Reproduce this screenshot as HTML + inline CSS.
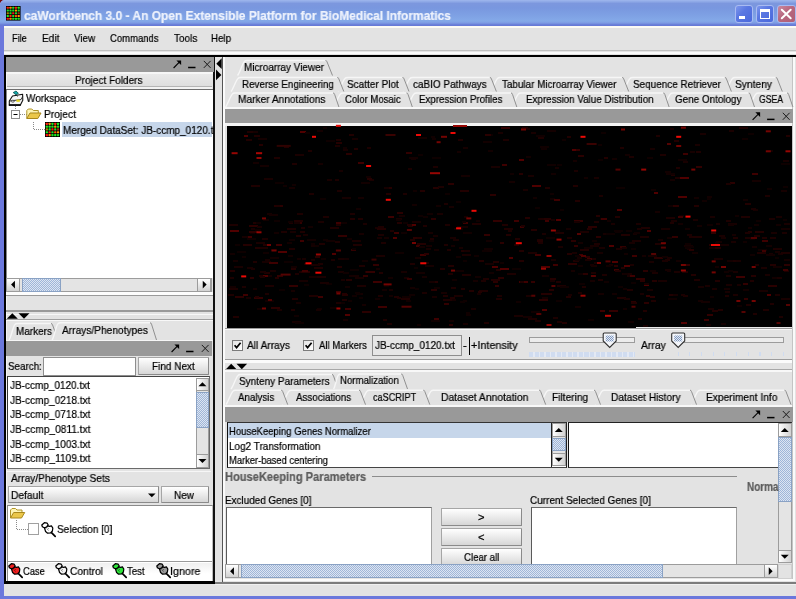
<!DOCTYPE html>
<html><head><meta charset="utf-8"><title>caWorkbench 3.0</title>
<style>
html,body{margin:0;padding:0;}
body{width:796px;height:599px;overflow:hidden;position:relative;background:#e3e3e3;font-family:"Liberation Sans",sans-serif;font-size:11px;color:#000;}
#app{position:absolute;left:0;top:0;width:796px;height:599px;overflow:hidden;}
#app span.t{will-change:transform;-webkit-text-stroke:0.22px currentColor;}
#app div{position:absolute;box-sizing:border-box;}
#app svg{position:absolute;overflow:visible;}
#app span.t{position:absolute;white-space:nowrap;line-height:14px;height:14px;transform-origin:0 0;}
</style></head><body><div id="app">
<div style="left:0px;top:0px;width:796px;height:599px;background:#6b78dc;"></div>
<div style="left:0px;top:0px;width:796px;height:26px;background:linear-gradient(to bottom,#9fb7ed 0px,#90aae7 1.5px,#7c97de 3.5px,#7997df 8px,#7d9fe3 14px,#84a9e8 21px,#7d9be3 23px,#6b81d9 24.5px,#6577d5 26px);"></div>
<div style="left:4px;top:26px;width:792px;height:570px;background:#e3e3e3;"></div>
<svg style="left:5.5px;top:6.2px" width="14.6" height="14.6" viewBox="0 0 15 15"><rect width="15" height="15" fill="#000"/><rect x="0.75" y="0.75" width="2.2" height="2.2" rx="0.6" fill="#f21"/><rect x="3.55" y="0.75" width="2.2" height="2.2" rx="0.6" fill="#f80"/><rect x="6.35" y="0.75" width="2.2" height="2.2" rx="0.6" fill="#2d2"/><rect x="9.15" y="0.75" width="2.2" height="2.2" rx="0.6" fill="#f21"/><rect x="11.95" y="0.75" width="2.2" height="2.2" rx="0.6" fill="#2e2"/><rect x="0.75" y="3.55" width="2.2" height="2.2" rx="0.6" fill="#2d2"/><rect x="3.55" y="3.55" width="2.2" height="2.2" rx="0.6" fill="#2e2"/><rect x="6.35" y="3.55" width="2.2" height="2.2" rx="0.6" fill="#2d2"/><rect x="9.15" y="3.55" width="2.2" height="2.2" rx="0.6" fill="#f90"/><rect x="11.95" y="3.55" width="2.2" height="2.2" rx="0.6" fill="#2d2"/><rect x="0.75" y="6.35" width="2.2" height="2.2" rx="0.6" fill="#a80"/><rect x="3.55" y="6.35" width="2.2" height="2.2" rx="0.6" fill="#2d2"/><rect x="6.35" y="6.35" width="2.2" height="2.2" rx="0.6" fill="#f11"/><rect x="9.15" y="6.35" width="2.2" height="2.2" rx="0.6" fill="#2d2"/><rect x="11.95" y="6.35" width="2.2" height="2.2" rx="0.6" fill="#931"/><rect x="0.75" y="9.15" width="2.2" height="2.2" rx="0.6" fill="#2e2"/><rect x="3.55" y="9.15" width="2.2" height="2.2" rx="0.6" fill="#f21"/><rect x="6.35" y="9.15" width="2.2" height="2.2" rx="0.6" fill="#2d2"/><rect x="9.15" y="9.15" width="2.2" height="2.2" rx="0.6" fill="#f50"/><rect x="11.95" y="9.15" width="2.2" height="2.2" rx="0.6" fill="#f90"/><rect x="0.75" y="11.95" width="2.2" height="2.2" rx="0.6" fill="#f11"/><rect x="3.55" y="11.95" width="2.2" height="2.2" rx="0.6" fill="#f80"/><rect x="6.35" y="11.95" width="2.2" height="2.2" rx="0.6" fill="#2d2"/><rect x="9.15" y="11.95" width="2.2" height="2.2" rx="0.6" fill="#2e2"/><rect x="11.95" y="11.95" width="2.2" height="2.2" rx="0.6" fill="#2d2"/></svg>
<svg style="left:0;top:0" width="6" height="6"><path d="M0 0 H3.4 Q0.9 0.9 0 3.8 Z" fill="#7a0c0c"/><path d="M3.6 0.2 Q1 1 0.2 4" stroke="#8fa8ee" stroke-width="0.8" fill="none"/></svg>
<div style="left:734.7px;top:5px;width:18.5px;height:18px;background:linear-gradient(135deg,#7d97ec 0%,#5a78e2 40%,#4a68dc 100%);border:1px solid #a9bbf2;border-radius:3px;"></div>
<div style="left:738.7px;top:16px;width:6.5px;height:3px;background:#fff;"></div>
<div style="left:755.8px;top:5px;width:18.5px;height:18px;background:linear-gradient(135deg,#7d97ec 0%,#5a78e2 40%,#4a68dc 100%);border:1px solid #a9bbf2;border-radius:3px;"></div>
<div style="left:760.0px;top:9px;width:10px;height:10px;border:1px solid #fff;border-top:3px solid #fff;"></div>
<div style="left:777px;top:5px;width:18.5px;height:18px;background:linear-gradient(135deg,#c98aa0 0%,#b8677f 45%,#ae5f76 100%);border:1px solid #a9bbf2;border-radius:3px;"></div>
<svg style="left:777px;top:5px" width="18.5" height="18" viewBox="0 0 18.5 18"><path d="M4.8 4.8 L13.7 13.2 M13.7 4.8 L4.8 13.2" stroke="#fff" stroke-width="2" stroke-linecap="round" fill="none"/></svg>
<div style="left:4px;top:26px;width:792px;height:2px;background:#fbfaf4;"></div>
<div style="left:4px;top:50px;width:792px;height:1px;background:#c0c0c0;"></div>
<div style="left:4px;top:52px;width:792px;height:2px;background:#fbfbfb;"></div>
<div style="left:4px;top:54.8px;width:792px;height:2.2px;background:#000;"></div>
<div style="left:4px;top:55px;width:1.5px;height:528px;background:#000;"></div>
<div style="left:213px;top:57px;width:2px;height:526px;background:#111;"></div>
<div style="left:4px;top:581px;width:211px;height:3px;background:#000;"></div>
<div style="left:5.5px;top:57px;width:1px;height:524px;background:#f4f4f4;"></div>
<div style="left:6px;top:57px;width:207.5px;height:15px;background:#999999;"></div>
<svg style="left:0;top:0" width="796" height="599"><path d="M173.6 68.0 L179.79999999999998 61.699999999999996" stroke="#000" stroke-width="1.1" fill="none"/><path d="M176.39999999999998 60.4 H181.1 V65.1 Z" fill="#000"/><path d="M188.10000000000002 67.5 H195.5" stroke="#000" stroke-width="1.5" fill="none"/><path d="M203.79999999999998 60.9 L210.6 67.89999999999999 M210.6 60.9 L203.79999999999998 67.89999999999999" stroke="#1a1a1a" stroke-width="1" fill="none"/></svg>
<div style="left:6px;top:72px;width:207px;height:1.5px;background:#f6f6f6;"></div>
<div style="left:7px;top:73.5px;width:205px;height:12.5px;background:linear-gradient(#e9e9e9,#dedede);"></div>
<div style="left:7px;top:86px;width:205px;height:1px;background:#b4b4b4;"></div>
<div style="left:7px;top:87px;width:205px;height:1.5px;background:#f2f2f2;"></div>
<div style="left:6px;top:88.5px;width:207px;height:1.5px;background:#6e6e6e;"></div>
<div style="left:6px;top:90px;width:207px;height:188px;background:#fff;border-left:1px solid #888;"></div>
<div style="left:62px;top:122px;width:150px;height:15px;background:#c6d6ea;"></div>
<svg style="left:45px;top:122px" width="15" height="15" viewBox="0 0 15 15"><rect width="15" height="15" fill="#000"/><rect x="0.75" y="0.75" width="2.2" height="2.2" rx="0.6" fill="#f21"/><rect x="3.55" y="0.75" width="2.2" height="2.2" rx="0.6" fill="#f80"/><rect x="6.35" y="0.75" width="2.2" height="2.2" rx="0.6" fill="#2d2"/><rect x="9.15" y="0.75" width="2.2" height="2.2" rx="0.6" fill="#f21"/><rect x="11.95" y="0.75" width="2.2" height="2.2" rx="0.6" fill="#2e2"/><rect x="0.75" y="3.55" width="2.2" height="2.2" rx="0.6" fill="#2d2"/><rect x="3.55" y="3.55" width="2.2" height="2.2" rx="0.6" fill="#2e2"/><rect x="6.35" y="3.55" width="2.2" height="2.2" rx="0.6" fill="#2d2"/><rect x="9.15" y="3.55" width="2.2" height="2.2" rx="0.6" fill="#f90"/><rect x="11.95" y="3.55" width="2.2" height="2.2" rx="0.6" fill="#2d2"/><rect x="0.75" y="6.35" width="2.2" height="2.2" rx="0.6" fill="#a80"/><rect x="3.55" y="6.35" width="2.2" height="2.2" rx="0.6" fill="#2d2"/><rect x="6.35" y="6.35" width="2.2" height="2.2" rx="0.6" fill="#f11"/><rect x="9.15" y="6.35" width="2.2" height="2.2" rx="0.6" fill="#2d2"/><rect x="11.95" y="6.35" width="2.2" height="2.2" rx="0.6" fill="#931"/><rect x="0.75" y="9.15" width="2.2" height="2.2" rx="0.6" fill="#2e2"/><rect x="3.55" y="9.15" width="2.2" height="2.2" rx="0.6" fill="#f21"/><rect x="6.35" y="9.15" width="2.2" height="2.2" rx="0.6" fill="#2d2"/><rect x="9.15" y="9.15" width="2.2" height="2.2" rx="0.6" fill="#f50"/><rect x="11.95" y="9.15" width="2.2" height="2.2" rx="0.6" fill="#f90"/><rect x="0.75" y="11.95" width="2.2" height="2.2" rx="0.6" fill="#f11"/><rect x="3.55" y="11.95" width="2.2" height="2.2" rx="0.6" fill="#f80"/><rect x="6.35" y="11.95" width="2.2" height="2.2" rx="0.6" fill="#2d2"/><rect x="9.15" y="11.95" width="2.2" height="2.2" rx="0.6" fill="#2e2"/><rect x="11.95" y="11.95" width="2.2" height="2.2" rx="0.6" fill="#2d2"/></svg>
<svg style="left:0;top:0" width="796" height="599"><path d="M15.5 106 V110 M33.5 122 V130 M34 129.5 H45 M20 114.5 H27" stroke="#8a8a8a" stroke-width="1" stroke-dasharray="1 1" fill="none"/><rect x="11.5" y="110.5" width="8" height="8" fill="#fff" stroke="#8c8c8c"/><path d="M13.5 114.5 H17.5" stroke="#000"/><path d="M9.3 101 L12.5 96 L22.6 94.2 L22.8 100.2 L20.5 104.8 H9.3 Z" fill="#f6f6f6" stroke="#111" stroke-width="1.1" stroke-linejoin="round"/><path d="M9.5 101 L21 99.6 L22.7 96.5" fill="none" stroke="#222" stroke-width="0.9"/><path d="M8.8 105.2 H20.8" stroke="#000" stroke-width="1.4"/><ellipse cx="12.8" cy="101.2" rx="1.6" ry="1" fill="#ddd" stroke="#333" stroke-width="0.7"/><rect x="16.4" y="99.6" width="3.4" height="2.2" fill="#e2d21c"/><path d="M13.2 92.6 L16 91 L18.4 93.3 L16.2 94.9 Z" fill="#14a8a8" stroke="#064f4f" stroke-width="0.8"/><path d="M16 94.5 L17.5 96.5" stroke="#222" stroke-width="0.9"/></svg>
<svg style="left:0;top:0" width="796" height="599"><path d="M26.8 118.5 V110.5 L28.3 109 H31.8 L33.3 110.5 H38.3 V113" fill="#fdf4b4" stroke="#b09428" stroke-width="1"/><path d="M26.8 118.5 L30.0 113 H41.0 L37.8 118.5 Z" fill="#ebc74a" stroke="#a8871c" stroke-width="1"/></svg>
<div style="left:6px;top:277.6px;width:205.5px;height:14.7px;background:#e4e4e4;border:1px solid #9c9c9c;"></div>
<div style="left:6px;top:277.6px;width:14.2px;height:14.7px;background:linear-gradient(#ffffff,#d2d2d2);border:1px solid #9c9c9c;"></div>
<div style="left:197.3px;top:277.6px;width:14.2px;height:14.7px;background:linear-gradient(#ffffff,#d2d2d2);border:1px solid #9c9c9c;"></div>
<svg style="left:0;top:0" width="796" height="599"><polygon points="14.95,280.70000000000005 14.95,288.5 11.05,284.6" fill="#000"/></svg>
<svg style="left:0;top:0" width="796" height="599"><polygon points="202.75,280.70000000000005 202.75,288.5 206.64999999999998,284.6" fill="#000"/></svg>
<div style="left:21.5px;top:277.6px;width:39.5px;height:14.7px;background-color:#dde5f2;background-image:linear-gradient(45deg,#9fb6d8 25%,transparent 25%,transparent 75%,#9fb6d8 75%),linear-gradient(45deg,#9fb6d8 25%,transparent 25%,transparent 75%,#9fb6d8 75%);background-size:2px 2px;background-position:0 0,1px 1px;border:1px solid #8aa2c4;"></div>
<div style="left:6px;top:292.4px;width:207px;height:3px;background:#fdfdfd;"></div>
<div style="left:6px;top:295.3px;width:207px;height:1.2px;background:#9a9a9a;"></div>
<div style="left:6px;top:310.4px;width:207px;height:1.2px;background:#9a9a9a;"></div>
<div style="left:6px;top:313.6px;width:207px;height:1.1px;background:#f8f8f8;"></div>
<svg style="left:0;top:0" width="796" height="599"><polygon points="6.800000000000001,318.75 17.8,318.75 12.3,313.25" fill="#000"/></svg>
<svg style="left:0;top:0" width="796" height="599"><polygon points="18.5,313.25 29.5,313.25 24,318.75" fill="#000"/></svg>
<div style="left:6px;top:318.7px;width:207px;height:1.2px;background:#a0a0a0;"></div>
<div style="left:6px;top:320px;width:207px;height:1.2px;background:#f8f8f8;"></div>
<svg style="left:0;top:0" width="796" height="599"><path d="M9 340 C11 338 13 326 15 324.5 Q15.7 323.5 17.5 323.5 L51.0 323.5 Q52.2 323.5 52.5 324.8 L58 340" fill="#e2e2e2" stroke="none"/><path d="M9 340 C11 338 13 326 15 324.5 Q15.7 323.5 17.5 323.5 L51.0 323.5" fill="none" stroke="#f6f6f6" stroke-width="1.4"/><path d="M51.0 323.5 Q52.2 323.5 52.5 324.8 L58 340" fill="none" stroke="#909090" stroke-width="1"/></svg>
<svg style="left:0;top:0" width="796" height="599"><path d="M52 340 C54 338 56 325.3 58 323.8 Q58.7 322.8 60.5 322.8 L150.0 322.8 Q151.2 322.8 151.5 324.1 L156.5 340" fill="#e3e3e3" stroke="none"/><path d="M52 340 C54 338 56 325.3 58 323.8 Q58.7 322.8 60.5 322.8 L150.0 322.8" fill="none" stroke="#f6f6f6" stroke-width="1.4"/><path d="M150.0 322.8 Q151.2 322.8 151.5 324.1 L156.5 340" fill="none" stroke="#909090" stroke-width="1"/></svg>
<div style="left:6px;top:339.6px;width:207px;height:1.4px;background:#f6f6f6;"></div>
<div style="left:6px;top:341px;width:205.5px;height:15px;background:#999999;"></div>
<svg style="left:0;top:0" width="796" height="599"><path d="M171.6 352.0 L177.79999999999998 345.7" stroke="#000" stroke-width="1.1" fill="none"/><path d="M174.39999999999998 344.40000000000003 H179.1 V349.1 Z" fill="#000"/><path d="M186.10000000000002 351.5 H193.5" stroke="#000" stroke-width="1.5" fill="none"/><path d="M201.79999999999998 344.90000000000003 L208.6 351.90000000000003 M208.6 344.90000000000003 L201.79999999999998 351.90000000000003" stroke="#1a1a1a" stroke-width="1" fill="none"/></svg>
<div style="left:42.5px;top:357px;width:93px;height:19px;background:#fff;border:1px solid #8e8e8e;"></div>
<div style="left:137.5px;top:357px;width:71.5px;height:18.3px;background:linear-gradient(#ffffff 0%,#efefef 40%,#d6d6d6 100%);border:1px solid #a6a6a6;border-right-color:#8a8a8a;border-bottom-color:#8a8a8a;border-radius:1px;"></div>
<div style="left:7px;top:376.3px;width:203px;height:92.5px;background:#fff;border:1px solid #6a6a6a;border-left-color:#333;border-top-color:#444;"></div>
<div style="left:195.7px;top:377.5px;width:13.5px;height:90px;background:#e4e4e4;border:1px solid #9c9c9c;"></div>
<div style="left:195.7px;top:377.5px;width:13.5px;height:13.5px;background:linear-gradient(90deg,#ffffff,#d2d2d2);border:1px solid #9c9c9c;"></div>
<div style="left:195.7px;top:454.0px;width:13.5px;height:13.5px;background:linear-gradient(90deg,#ffffff,#d2d2d2);border:1px solid #9c9c9c;"></div>
<svg style="left:0;top:0" width="796" height="599"><polygon points="198.45,386.2 206.45,386.2 202.45,382.2" fill="#000"/></svg>
<svg style="left:0;top:0" width="796" height="599"><polygon points="198.45,459.0 206.45,459.0 202.45,463.0" fill="#000"/></svg>
<div style="left:195.7px;top:392px;width:13.5px;height:36px;background-color:#dde5f2;background-image:linear-gradient(45deg,#9fb6d8 25%,transparent 25%,transparent 75%,#9fb6d8 75%),linear-gradient(45deg,#9fb6d8 25%,transparent 25%,transparent 75%,#9fb6d8 75%);background-size:2px 2px;background-position:0 0,1px 1px;border:1px solid #8aa2c4;"></div>
<div style="left:6px;top:471px;width:205px;height:1px;background:#f6f6f6;"></div>
<div style="left:8px;top:486px;width:150.5px;height:17px;background:linear-gradient(#ffffff 0%,#efefef 40%,#d6d6d6 100%);border:1px solid #a6a6a6;border-right-color:#8a8a8a;border-bottom-color:#8a8a8a;"></div>
<svg style="left:0;top:0" width="796" height="599"><polygon points="148.0,493.40000000000003 155.60000000000002,493.40000000000003 151.8,497.2" fill="#000"/></svg>
<div style="left:160.6px;top:486px;width:48.5px;height:17.2px;background:linear-gradient(#ffffff 0%,#efefef 40%,#d6d6d6 100%);border:1px solid #a6a6a6;border-right-color:#8a8a8a;border-bottom-color:#8a8a8a;border-radius:1px;"></div>
<div style="left:7px;top:505px;width:206px;height:76px;background:#fff;border:1px solid #8a8a8a;border-bottom:none;border-right-color:#bbb;"></div>
<div style="left:8px;top:561.3px;width:204px;height:1.2px;background:#9a9a9a;"></div>
<div style="left:8px;top:562.5px;width:204px;height:18.5px;background:linear-gradient(#f0f0f0,#ffffff 60%);"></div>
<svg style="left:0;top:0" width="796" height="599"><path d="M10.5 518.0 V510.0 L12.0 508.5 H15.5 L17.0 510.0 H22.0 V512.5" fill="#fdf4b4" stroke="#b09428" stroke-width="1"/><path d="M10.5 518.0 L13.7 512.5 H24.7 L21.5 518.0 Z" fill="#ebc74a" stroke="#a8871c" stroke-width="1"/></svg>
<svg style="left:0;top:0" width="796" height="599"><path d="M16.5 520 V530 M17 529.5 H28" stroke="#8a8a8a" stroke-dasharray="1 1" fill="none"/><rect x="28.5" y="523.5" width="10" height="11" fill="#fff" stroke="#a0a0a0"/></svg>
<svg style="left:41px;top:521.5px" width="15" height="15" viewBox="0 0 15 15"><path d="M10 10.2 L14.2 14.3" stroke="#000" stroke-width="1.7" stroke-linecap="round"/><path d="M3.6 6.2 L6.4 3.8 L8.6 4.4 L10.4 3.8 L11.8 6 L11.4 9 L9.6 11 L6.6 11.2 L4.6 9.6 Z" fill="#fff" stroke="#000" stroke-width="1.25" stroke-linejoin="round"/><path d="M0.8 3 L3.4 0.7 L6.2 1.2 L7.2 3 L5.6 5 L3.2 5.8 L1.4 4.8 Z" fill="#fff" stroke="#000" stroke-width="1.25" stroke-linejoin="round"/><path d="M5.6 6.6 L7.6 8.6 M6.6 6 L8 7" stroke="#000" stroke-opacity="0.45" stroke-width="0.9" fill="none"/></svg>
<svg style="left:8.3px;top:563px" width="15" height="15" viewBox="0 0 15 15"><path d="M10 10.2 L14.2 14.3" stroke="#000" stroke-width="1.7" stroke-linecap="round"/><path d="M3.6 6.2 L6.4 3.8 L8.6 4.4 L10.4 3.8 L11.8 6 L11.4 9 L9.6 11 L6.6 11.2 L4.6 9.6 Z" fill="#f02020" stroke="#000" stroke-width="1.25" stroke-linejoin="round"/><path d="M0.8 3 L3.4 0.7 L6.2 1.2 L7.2 3 L5.6 5 L3.2 5.8 L1.4 4.8 Z" fill="#f02020" stroke="#000" stroke-width="1.25" stroke-linejoin="round"/><path d="M5.6 6.6 L7.6 8.6 M6.6 6 L8 7" stroke="#000" stroke-opacity="0.45" stroke-width="0.9" fill="none"/></svg>
<svg style="left:55.3px;top:563px" width="15" height="15" viewBox="0 0 15 15"><path d="M10 10.2 L14.2 14.3" stroke="#000" stroke-width="1.7" stroke-linecap="round"/><path d="M3.6 6.2 L6.4 3.8 L8.6 4.4 L10.4 3.8 L11.8 6 L11.4 9 L9.6 11 L6.6 11.2 L4.6 9.6 Z" fill="#f4f4f4" stroke="#000" stroke-width="1.25" stroke-linejoin="round"/><path d="M0.8 3 L3.4 0.7 L6.2 1.2 L7.2 3 L5.6 5 L3.2 5.8 L1.4 4.8 Z" fill="#f4f4f4" stroke="#000" stroke-width="1.25" stroke-linejoin="round"/><path d="M5.6 6.6 L7.6 8.6 M6.6 6 L8 7" stroke="#000" stroke-opacity="0.45" stroke-width="0.9" fill="none"/></svg>
<svg style="left:112.3px;top:563px" width="15" height="15" viewBox="0 0 15 15"><path d="M10 10.2 L14.2 14.3" stroke="#000" stroke-width="1.7" stroke-linecap="round"/><path d="M3.6 6.2 L6.4 3.8 L8.6 4.4 L10.4 3.8 L11.8 6 L11.4 9 L9.6 11 L6.6 11.2 L4.6 9.6 Z" fill="#2ee63a" stroke="#000" stroke-width="1.25" stroke-linejoin="round"/><path d="M0.8 3 L3.4 0.7 L6.2 1.2 L7.2 3 L5.6 5 L3.2 5.8 L1.4 4.8 Z" fill="#2ee63a" stroke="#000" stroke-width="1.25" stroke-linejoin="round"/><path d="M5.6 6.6 L7.6 8.6 M6.6 6 L8 7" stroke="#000" stroke-opacity="0.45" stroke-width="0.9" fill="none"/></svg>
<svg style="left:156.3px;top:563px" width="15" height="15" viewBox="0 0 15 15"><path d="M10 10.2 L14.2 14.3" stroke="#000" stroke-width="1.7" stroke-linecap="round"/><path d="M3.6 6.2 L6.4 3.8 L8.6 4.4 L10.4 3.8 L11.8 6 L11.4 9 L9.6 11 L6.6 11.2 L4.6 9.6 Z" fill="#9a9a9a" stroke="#000" stroke-width="1.25" stroke-linejoin="round"/><path d="M0.8 3 L3.4 0.7 L6.2 1.2 L7.2 3 L5.6 5 L3.2 5.8 L1.4 4.8 Z" fill="#9a9a9a" stroke="#000" stroke-width="1.25" stroke-linejoin="round"/><path d="M5.6 6.6 L7.6 8.6 M6.6 6 L8 7" stroke="#000" stroke-opacity="0.45" stroke-width="0.9" fill="none"/></svg>
<svg style="left:0;top:0" width="796" height="599"><polygon points="221.7,58.300000000000004 221.7,69.10000000000001 216.3,63.7" fill="#000"/></svg>
<svg style="left:0;top:0" width="796" height="599"><polygon points="216.0,69.5 216.0,80.30000000000001 221.39999999999998,74.9" fill="#000"/></svg>
<div style="left:222px;top:57px;width:1.2px;height:527px;background:#555;"></div>
<div style="left:223.2px;top:57.4px;width:1.8px;height:524px;background:#fbfbfb;"></div>
<div style="left:792.3px;top:57.4px;width:1px;height:524px;background:#c4c4c4;"></div>
<div style="left:793.2px;top:57.4px;width:2px;height:524px;background:#fafafa;"></div>
<svg style="left:0;top:0" width="796" height="599"><path d="M237.5 75.5 C239.5 73.5 242.5 63 244.5 61.5 Q245.2 60.5 247.0 60.5 L325.5 60.5 Q326.7 60.5 327.0 61.8 L332.5 75.5" fill="#e2e2e2" stroke="none"/><path d="M237.5 75.5 C239.5 73.5 242.5 63 244.5 61.5 Q245.2 60.5 247.0 60.5 L325.5 60.5" fill="none" stroke="#f6f6f6" stroke-width="1.4"/><path d="M325.5 60.5 Q326.7 60.5 327.0 61.8 L332.5 75.5" fill="none" stroke="#909090" stroke-width="1"/></svg>
<svg style="left:0;top:0" width="796" height="599"><path d="M725.5 91.5 C727.5 89.5 730.5 80 732.5 78.5 Q733.2 77.5 735.0 77.5 L775.8 77.5 Q777.0 77.5 777.3 78.8 L782.3 91.5" fill="#e2e2e2" stroke="none"/><path d="M725.5 91.5 C727.5 89.5 730.5 80 732.5 78.5 Q733.2 77.5 735.0 77.5 L775.8 77.5" fill="none" stroke="#f6f6f6" stroke-width="1.4"/><path d="M775.8 77.5 Q777.0 77.5 777.3 78.8 L782.3 91.5" fill="none" stroke="#909090" stroke-width="1"/></svg>
<svg style="left:0;top:0" width="796" height="599"><path d="M623 91.5 C625 89.5 628 80 630 78.5 Q630.7 77.5 632.5 77.5 L724.9 77.5 Q726.1 77.5 726.4 78.8 L731.4 91.5" fill="#e2e2e2" stroke="none"/><path d="M623 91.5 C625 89.5 628 80 630 78.5 Q630.7 77.5 632.5 77.5 L724.9 77.5" fill="none" stroke="#f6f6f6" stroke-width="1.4"/><path d="M724.9 77.5 Q726.1 77.5 726.4 78.8 L731.4 91.5" fill="none" stroke="#909090" stroke-width="1"/></svg>
<svg style="left:0;top:0" width="796" height="599"><path d="M490.5 91.5 C492.5 89.5 495.5 80 497.5 78.5 Q498.2 77.5 500.0 77.5 L622.2 77.5 Q623.4000000000001 77.5 623.7 78.8 L628.7 91.5" fill="#e2e2e2" stroke="none"/><path d="M490.5 91.5 C492.5 89.5 495.5 80 497.5 78.5 Q498.2 77.5 500.0 77.5 L622.2 77.5" fill="none" stroke="#f6f6f6" stroke-width="1.4"/><path d="M622.2 77.5 Q623.4000000000001 77.5 623.7 78.8 L628.7 91.5" fill="none" stroke="#909090" stroke-width="1"/></svg>
<svg style="left:0;top:0" width="796" height="599"><path d="M403 91.5 C405 89.5 408 80 410 78.5 Q410.7 77.5 412.5 77.5 L489.9 77.5 Q491.09999999999997 77.5 491.4 78.8 L496.4 91.5" fill="#e2e2e2" stroke="none"/><path d="M403 91.5 C405 89.5 408 80 410 78.5 Q410.7 77.5 412.5 77.5 L489.9 77.5" fill="none" stroke="#f6f6f6" stroke-width="1.4"/><path d="M489.9 77.5 Q491.09999999999997 77.5 491.4 78.8 L496.4 91.5" fill="none" stroke="#909090" stroke-width="1"/></svg>
<svg style="left:0;top:0" width="796" height="599"><path d="M338 91.5 C340 89.5 343 80 345 78.5 Q345.7 77.5 347.5 77.5 L402.5 77.5 Q403.7 77.5 404.0 78.8 L409 91.5" fill="#e2e2e2" stroke="none"/><path d="M338 91.5 C340 89.5 343 80 345 78.5 Q345.7 77.5 347.5 77.5 L402.5 77.5" fill="none" stroke="#f6f6f6" stroke-width="1.4"/><path d="M402.5 77.5 Q403.7 77.5 404.0 78.8 L409 91.5" fill="none" stroke="#909090" stroke-width="1"/></svg>
<svg style="left:0;top:0" width="796" height="599"><path d="M231 91.5 C233 89.5 236 80 238 78.5 Q238.7 77.5 240.5 77.5 L337.3 77.5 Q338.5 77.5 338.8 78.8 L343.8 91.5" fill="#e2e2e2" stroke="none"/><path d="M231 91.5 C233 89.5 236 80 238 78.5 Q238.7 77.5 240.5 77.5 L337.3 77.5" fill="none" stroke="#f6f6f6" stroke-width="1.4"/><path d="M337.3 77.5 Q338.5 77.5 338.8 78.8 L343.8 91.5" fill="none" stroke="#909090" stroke-width="1"/></svg>
<svg style="left:0;top:0" width="796" height="599"><path d="M749 107 C751 105 754 95.5 756 94.0 Q756.7 93.0 758.5 93.0 L787.1 93.0 Q788.3000000000001 93.0 788.6 94.3 L792.9 107" fill="#e2e2e2" stroke="none"/><path d="M749 107 C751 105 754 95.5 756 94.0 Q756.7 93.0 758.5 93.0 L787.1 93.0" fill="none" stroke="#f6f6f6" stroke-width="1.4"/><path d="M787.1 93.0 Q788.3000000000001 93.0 788.6 94.3 L792.9 107" fill="none" stroke="#909090" stroke-width="1"/></svg>
<svg style="left:0;top:0" width="796" height="599"><path d="M663.5 107 C665.5 105 668.5 95.5 670.5 94.0 Q671.2 93.0 673.0 93.0 L748.7 93.0 Q749.9000000000001 93.0 750.2 94.3 L754.5 107" fill="#e2e2e2" stroke="none"/><path d="M663.5 107 C665.5 105 668.5 95.5 670.5 94.0 Q671.2 93.0 673.0 93.0 L748.7 93.0" fill="none" stroke="#f6f6f6" stroke-width="1.4"/><path d="M748.7 93.0 Q749.9000000000001 93.0 750.2 94.3 L754.5 107" fill="none" stroke="#909090" stroke-width="1"/></svg>
<svg style="left:0;top:0" width="796" height="599"><path d="M511.5 107 C513.5 105 516.5 95.5 518.5 94.0 Q519.2 93.0 521.0 93.0 L663.3000000000001 93.0 Q664.5000000000001 93.0 664.8000000000001 94.3 L669.1 107" fill="#e2e2e2" stroke="none"/><path d="M511.5 107 C513.5 105 516.5 95.5 518.5 94.0 Q519.2 93.0 521.0 93.0 L663.3000000000001 93.0" fill="none" stroke="#f6f6f6" stroke-width="1.4"/><path d="M663.3000000000001 93.0 Q664.5000000000001 93.0 664.8000000000001 94.3 L669.1 107" fill="none" stroke="#909090" stroke-width="1"/></svg>
<svg style="left:0;top:0" width="796" height="599"><path d="M407 107 C409 105 412 95.5 414 94.0 Q414.7 93.0 416.5 93.0 L511.0 93.0 Q512.2 93.0 512.5 94.3 L516.8 107" fill="#e2e2e2" stroke="none"/><path d="M407 107 C409 105 412 95.5 414 94.0 Q414.7 93.0 416.5 93.0 L511.0 93.0" fill="none" stroke="#f6f6f6" stroke-width="1.4"/><path d="M511.0 93.0 Q512.2 93.0 512.5 94.3 L516.8 107" fill="none" stroke="#909090" stroke-width="1"/></svg>
<svg style="left:0;top:0" width="796" height="599"><path d="M333.5 107 C335.5 105 338.5 95.5 340.5 94.0 Q341.2 93.0 343.0 93.0 L406.5 93.0 Q407.7 93.0 408.0 94.3 L412.3 107" fill="#e2e2e2" stroke="none"/><path d="M333.5 107 C335.5 105 338.5 95.5 340.5 94.0 Q341.2 93.0 343.0 93.0 L406.5 93.0" fill="none" stroke="#f6f6f6" stroke-width="1.4"/><path d="M406.5 93.0 Q407.7 93.0 408.0 94.3 L412.3 107" fill="none" stroke="#909090" stroke-width="1"/></svg>
<svg style="left:0;top:0" width="796" height="599"><path d="M225.5 107 C227.5 105 230.5 95.5 232.5 94.0 Q233.2 93.0 235.0 93.0 L333.09999999999997 93.0 Q334.29999999999995 93.0 334.59999999999997 94.3 L338.9 107" fill="#e2e2e2" stroke="none"/><path d="M225.5 107 C227.5 105 230.5 95.5 232.5 94.0 Q233.2 93.0 235.0 93.0 L333.09999999999997 93.0" fill="none" stroke="#f6f6f6" stroke-width="1.4"/><path d="M333.09999999999997 93.0 Q334.29999999999995 93.0 334.59999999999997 94.3 L338.9 107" fill="none" stroke="#909090" stroke-width="1"/></svg>
<div style="left:225px;top:107px;width:567px;height:2px;background:#f8f8f8;"></div>
<div style="left:225px;top:109.2px;width:567.5px;height:14px;background:#999999;"></div>
<svg style="left:0;top:0" width="796" height="599"><path d="M752.6 119.9 L758.8000000000001 113.60000000000001" stroke="#000" stroke-width="1.1" fill="none"/><path d="M755.4000000000001 112.3 H760.1 V117.0 Z" fill="#000"/><path d="M767.0999999999999 119.4 H774.5" stroke="#000" stroke-width="1.5" fill="none"/><path d="M782.8000000000001 112.8 L789.6 119.8 M789.6 112.8 L782.8000000000001 119.8" stroke="#1a1a1a" stroke-width="1" fill="none"/></svg>
<div style="left:225px;top:123.2px;width:567px;height:2.8px;background:#f4f4f4;"></div>
<div style="left:227px;top:126px;width:564.5px;height:202px;background:#000;"></div>
<div style="left:636px;top:326.7px;width:156px;height:1.5px;background:#e8e8e8;"></div>
<div style="left:225px;top:328px;width:567px;height:1.2px;background:#9a9a9a;"></div>
<div style="left:225px;top:329.2px;width:567px;height:1.2px;background:#f8f8f8;"></div>
<svg style="left:0;top:0" width="796" height="599"><rect x="409" y="157" width="9" height="2" fill="rgb(20,0,0)"/><rect x="432" y="138" width="4" height="2" fill="rgb(18,0,0)"/><rect x="461" y="175" width="9" height="2" fill="rgb(20,0,0)"/><rect x="757" y="252" width="9" height="2" fill="rgb(30,0,0)"/><rect x="449" y="320" width="5" height="2" fill="rgb(18,0,0)"/><rect x="308" y="150" width="4" height="2" fill="rgb(30,0,0)"/><rect x="547" y="164" width="9" height="2" fill="rgb(16,0,0)"/><rect x="573" y="260" width="6" height="2" fill="rgb(30,0,0)"/><rect x="743" y="199" width="5" height="2" fill="rgb(18,0,0)"/><rect x="549" y="289" width="5" height="2" fill="rgb(36,0,0)"/><rect x="775" y="251" width="5" height="2" fill="rgb(22,0,0)"/><rect x="463" y="222" width="5" height="2" fill="rgb(62,0,0)"/><rect x="423" y="225" width="4" height="2" fill="rgb(30,0,0)"/><rect x="493" y="220" width="9" height="2" fill="rgb(50,0,0)"/><rect x="687" y="248" width="4" height="2" fill="rgb(20,0,0)"/><rect x="426" y="248" width="5" height="2" fill="rgb(22,0,0)"/><rect x="640" y="293" width="4" height="2" fill="rgb(24,0,0)"/><rect x="479" y="290" width="9" height="2" fill="rgb(30,0,0)"/><rect x="622" y="273" width="5" height="2" fill="rgb(22,0,0)"/><rect x="274" y="157" width="6" height="2" fill="rgb(30,0,0)"/><rect x="330" y="227" width="9" height="2" fill="rgb(30,0,0)"/><rect x="406" y="152" width="6" height="2" fill="rgb(50,0,0)"/><rect x="673" y="205" width="6" height="2" fill="rgb(42,0,0)"/><rect x="451" y="299" width="5" height="2" fill="rgb(20,0,0)"/><rect x="418" y="137" width="9" height="2" fill="rgb(20,0,0)"/><rect x="758" y="249" width="9" height="2" fill="rgb(16,0,0)"/><rect x="311" y="245" width="6" height="2" fill="rgb(20,0,0)"/><rect x="292" y="298" width="6" height="2" fill="rgb(32,0,0)"/><rect x="276" y="244" width="6" height="2" fill="rgb(62,0,0)"/><rect x="318" y="296" width="5" height="2" fill="rgb(62,0,0)"/><rect x="531" y="132" width="5" height="2" fill="rgb(24,0,0)"/><rect x="433" y="281" width="5" height="2" fill="rgb(36,0,0)"/><rect x="681" y="322" width="6" height="2" fill="rgb(80,0,0)"/><rect x="676" y="167" width="4" height="2" fill="rgb(30,0,0)"/><rect x="492" y="266" width="6" height="2" fill="rgb(80,0,0)"/><rect x="779" y="316" width="4" height="2" fill="rgb(28,0,0)"/><rect x="490" y="194" width="6" height="2" fill="rgb(42,0,0)"/><rect x="420" y="254" width="6" height="2" fill="rgb(62,0,0)"/><rect x="647" y="230" width="4" height="2" fill="rgb(80,0,0)"/><rect x="449" y="206" width="5" height="2" fill="rgb(22,0,0)"/><rect x="243" y="244" width="9" height="2" fill="rgb(36,0,0)"/><rect x="775" y="257" width="4" height="2" fill="rgb(14,0,0)"/><rect x="674" y="271" width="6" height="2" fill="rgb(26,0,0)"/><rect x="689" y="236" width="9" height="2" fill="rgb(28,0,0)"/><rect x="654" y="192" width="4" height="2" fill="rgb(80,0,0)"/><rect x="425" y="265" width="9" height="2" fill="rgb(22,0,0)"/><rect x="525" y="217" width="5" height="2" fill="rgb(36,0,0)"/><rect x="230" y="230" width="9" height="2" fill="rgb(80,0,0)"/><rect x="295" y="273" width="4" height="2" fill="rgb(28,0,0)"/><rect x="260" y="165" width="9" height="2" fill="rgb(20,0,0)"/><rect x="541" y="293" width="5" height="2" fill="rgb(36,0,0)"/><rect x="771" y="232" width="6" height="2" fill="rgb(24,0,0)"/><rect x="526" y="295" width="9" height="2" fill="rgb(26,0,0)"/><rect x="697" y="225" width="5" height="2" fill="rgb(18,0,0)"/><rect x="603" y="233" width="4" height="2" fill="rgb(22,0,0)"/><rect x="752" y="246" width="5" height="2" fill="rgb(20,0,0)"/><rect x="351" y="249" width="5" height="2" fill="rgb(50,0,0)"/><rect x="693" y="252" width="5" height="2" fill="rgb(18,0,0)"/><rect x="337" y="190" width="5" height="2" fill="rgb(28,0,0)"/><rect x="484" y="248" width="9" height="2" fill="rgb(18,0,0)"/><rect x="291" y="309" width="4" height="2" fill="rgb(30,0,0)"/><rect x="380" y="306" width="6" height="2" fill="rgb(50,0,0)"/><rect x="685" y="228" width="5" height="2" fill="rgb(18,0,0)"/><rect x="384" y="285" width="5" height="2" fill="rgb(14,0,0)"/><rect x="582" y="286" width="4" height="2" fill="rgb(30,0,0)"/><rect x="709" y="244" width="5" height="2" fill="rgb(36,0,0)"/><rect x="300" y="231" width="5" height="2" fill="rgb(30,0,0)"/><rect x="256" y="242" width="9" height="2" fill="rgb(26,0,0)"/><rect x="390" y="230" width="4" height="2" fill="rgb(30,0,0)"/><rect x="249" y="131" width="9" height="2" fill="rgb(22,0,0)"/><rect x="365" y="271" width="6" height="2" fill="rgb(28,0,0)"/><rect x="694" y="205" width="5" height="2" fill="rgb(34,0,0)"/><rect x="339" y="302" width="6" height="2" fill="rgb(14,0,0)"/><rect x="776" y="216" width="6" height="2" fill="rgb(24,0,0)"/><rect x="259" y="247" width="9" height="2" fill="rgb(28,0,0)"/><rect x="615" y="231" width="6" height="2" fill="rgb(14,0,0)"/><rect x="375" y="298" width="5" height="2" fill="rgb(16,0,0)"/><rect x="767" y="188" width="5" height="2" fill="rgb(16,0,0)"/><rect x="275" y="182" width="9" height="2" fill="rgb(14,0,0)"/><rect x="279" y="289" width="6" height="2" fill="rgb(14,0,0)"/><rect x="395" y="252" width="9" height="2" fill="rgb(16,0,0)"/><rect x="654" y="257" width="9" height="2" fill="rgb(42,0,0)"/><rect x="309" y="276" width="9" height="2" fill="rgb(22,0,0)"/><rect x="736" y="276" width="9" height="2" fill="rgb(62,0,0)"/><rect x="609" y="264" width="4" height="2" fill="rgb(22,0,0)"/><rect x="584" y="247" width="9" height="2" fill="rgb(16,0,0)"/><rect x="578" y="273" width="5" height="2" fill="rgb(14,0,0)"/><rect x="483" y="141" width="9" height="2" fill="rgb(18,0,0)"/><rect x="644" y="284" width="5" height="2" fill="rgb(80,0,0)"/><rect x="650" y="270" width="6" height="2" fill="rgb(16,0,0)"/><rect x="271" y="307" width="9" height="2" fill="rgb(42,0,0)"/><rect x="587" y="228" width="5" height="2" fill="rgb(36,0,0)"/><rect x="545" y="220" width="4" height="2" fill="rgb(62,0,0)"/><rect x="349" y="275" width="6" height="2" fill="rgb(20,0,0)"/><rect x="488" y="150" width="5" height="2" fill="rgb(18,0,0)"/><rect x="750" y="254" width="5" height="2" fill="rgb(16,0,0)"/><rect x="345" y="314" width="5" height="2" fill="rgb(80,0,0)"/><rect x="520" y="226" width="4" height="2" fill="rgb(62,0,0)"/><rect x="432" y="289" width="4" height="2" fill="rgb(24,0,0)"/><rect x="230" y="253" width="5" height="2" fill="rgb(18,0,0)"/><rect x="420" y="190" width="5" height="2" fill="rgb(34,0,0)"/><rect x="696" y="151" width="5" height="2" fill="rgb(30,0,0)"/><rect x="436" y="205" width="5" height="2" fill="rgb(18,0,0)"/><rect x="650" y="296" width="5" height="2" fill="rgb(42,0,0)"/><rect x="750" y="238" width="5" height="2" fill="rgb(14,0,0)"/><rect x="666" y="217" width="9" height="2" fill="rgb(28,0,0)"/><rect x="342" y="294" width="6" height="2" fill="rgb(36,0,0)"/><rect x="648" y="255" width="9" height="2" fill="rgb(22,0,0)"/><rect x="323" y="239" width="5" height="2" fill="rgb(16,0,0)"/><rect x="594" y="262" width="4" height="2" fill="rgb(24,0,0)"/><rect x="587" y="258" width="9" height="2" fill="rgb(28,0,0)"/><rect x="481" y="280" width="5" height="2" fill="rgb(28,0,0)"/><rect x="335" y="145" width="5" height="2" fill="rgb(28,0,0)"/><rect x="434" y="287" width="6" height="2" fill="rgb(16,0,0)"/><rect x="459" y="247" width="4" height="2" fill="rgb(22,0,0)"/><rect x="383" y="319" width="4" height="2" fill="rgb(30,0,0)"/><rect x="728" y="270" width="5" height="2" fill="rgb(14,0,0)"/><rect x="299" y="280" width="9" height="2" fill="rgb(22,0,0)"/><rect x="228" y="294" width="6" height="2" fill="rgb(28,0,0)"/><rect x="665" y="171" width="6" height="2" fill="rgb(18,0,0)"/><rect x="536" y="135" width="9" height="2" fill="rgb(16,0,0)"/><rect x="588" y="226" width="9" height="2" fill="rgb(42,0,0)"/><rect x="472" y="223" width="9" height="2" fill="rgb(30,0,0)"/><rect x="335" y="179" width="4" height="2" fill="rgb(28,0,0)"/><rect x="396" y="218" width="6" height="2" fill="rgb(24,0,0)"/><rect x="359" y="297" width="4" height="2" fill="rgb(14,0,0)"/><rect x="336" y="302" width="5" height="2" fill="rgb(28,0,0)"/><rect x="600" y="310" width="5" height="2" fill="rgb(62,0,0)"/><rect x="463" y="232" width="9" height="2" fill="rgb(18,0,0)"/><rect x="343" y="319" width="5" height="2" fill="rgb(20,0,0)"/><rect x="352" y="240" width="9" height="2" fill="rgb(24,0,0)"/><rect x="728" y="223" width="9" height="2" fill="rgb(22,0,0)"/><rect x="742" y="138" width="6" height="2" fill="rgb(16,0,0)"/><rect x="624" y="253" width="4" height="2" fill="rgb(18,0,0)"/><rect x="748" y="231" width="4" height="2" fill="rgb(32,0,0)"/><rect x="599" y="247" width="6" height="2" fill="rgb(24,0,0)"/><rect x="289" y="222" width="4" height="2" fill="rgb(28,0,0)"/><rect x="766" y="245" width="6" height="2" fill="rgb(18,0,0)"/><rect x="255" y="247" width="5" height="2" fill="rgb(34,0,0)"/><rect x="431" y="218" width="5" height="2" fill="rgb(42,0,0)"/><rect x="656" y="135" width="4" height="2" fill="rgb(30,0,0)"/><rect x="337" y="266" width="5" height="2" fill="rgb(34,0,0)"/><rect x="762" y="237" width="5" height="2" fill="rgb(32,0,0)"/><rect x="230" y="277" width="4" height="2" fill="rgb(28,0,0)"/><rect x="288" y="255" width="5" height="2" fill="rgb(18,0,0)"/><rect x="683" y="153" width="5" height="2" fill="rgb(62,0,0)"/><rect x="659" y="243" width="6" height="2" fill="rgb(14,0,0)"/><rect x="665" y="259" width="5" height="2" fill="rgb(28,0,0)"/><rect x="456" y="256" width="5" height="2" fill="rgb(18,0,0)"/><rect x="721" y="323" width="5" height="2" fill="rgb(20,0,0)"/><rect x="463" y="323" width="5" height="2" fill="rgb(22,0,0)"/><rect x="461" y="250" width="5" height="2" fill="rgb(32,0,0)"/><rect x="384" y="237" width="5" height="2" fill="rgb(20,0,0)"/><rect x="366" y="176" width="5" height="2" fill="rgb(18,0,0)"/><rect x="449" y="324" width="4" height="2" fill="rgb(42,0,0)"/><rect x="487" y="134" width="6" height="2" fill="rgb(14,0,0)"/><rect x="251" y="185" width="9" height="2" fill="rgb(30,0,0)"/><rect x="336" y="142" width="6" height="2" fill="rgb(36,0,0)"/><rect x="373" y="281" width="9" height="2" fill="rgb(62,0,0)"/><rect x="574" y="170" width="4" height="2" fill="rgb(26,0,0)"/><rect x="786" y="135" width="4" height="2" fill="rgb(34,0,0)"/><rect x="456" y="201" width="5" height="2" fill="rgb(16,0,0)"/><rect x="672" y="236" width="6" height="2" fill="rgb(50,0,0)"/><rect x="535" y="254" width="6" height="2" fill="rgb(62,0,0)"/><rect x="379" y="272" width="4" height="2" fill="rgb(32,0,0)"/><rect x="644" y="302" width="5" height="2" fill="rgb(42,0,0)"/><rect x="338" y="271" width="6" height="2" fill="rgb(24,0,0)"/><rect x="464" y="250" width="6" height="2" fill="rgb(24,0,0)"/><rect x="301" y="227" width="4" height="2" fill="rgb(30,0,0)"/><rect x="575" y="200" width="5" height="2" fill="rgb(32,0,0)"/><rect x="318" y="221" width="6" height="2" fill="rgb(26,0,0)"/><rect x="396" y="219" width="5" height="2" fill="rgb(16,0,0)"/><rect x="567" y="253" width="5" height="2" fill="rgb(36,0,0)"/><rect x="454" y="295" width="9" height="2" fill="rgb(26,0,0)"/><rect x="251" y="228" width="4" height="2" fill="rgb(22,0,0)"/><rect x="366" y="271" width="9" height="2" fill="rgb(50,0,0)"/><rect x="249" y="225" width="9" height="2" fill="rgb(42,0,0)"/><rect x="662" y="256" width="6" height="2" fill="rgb(16,0,0)"/><rect x="596" y="215" width="4" height="2" fill="rgb(36,0,0)"/><rect x="778" y="253" width="5" height="2" fill="rgb(22,0,0)"/><rect x="451" y="245" width="4" height="2" fill="rgb(20,0,0)"/><rect x="509" y="257" width="4" height="2" fill="rgb(80,0,0)"/><rect x="403" y="222" width="5" height="2" fill="rgb(14,0,0)"/><rect x="706" y="324" width="5" height="2" fill="rgb(22,0,0)"/><rect x="776" y="224" width="5" height="2" fill="rgb(18,0,0)"/><rect x="693" y="236" width="9" height="2" fill="rgb(30,0,0)"/><rect x="733" y="237" width="5" height="2" fill="rgb(30,0,0)"/><rect x="375" y="227" width="5" height="2" fill="rgb(24,0,0)"/><rect x="453" y="239" width="6" height="2" fill="rgb(24,0,0)"/><rect x="670" y="179" width="5" height="2" fill="rgb(20,0,0)"/><rect x="538" y="242" width="5" height="2" fill="rgb(28,0,0)"/><rect x="579" y="283" width="6" height="2" fill="rgb(14,0,0)"/><rect x="550" y="280" width="5" height="2" fill="rgb(24,0,0)"/><rect x="571" y="240" width="5" height="2" fill="rgb(42,0,0)"/><rect x="767" y="294" width="4" height="2" fill="rgb(80,0,0)"/><rect x="247" y="267" width="6" height="2" fill="rgb(24,0,0)"/><rect x="431" y="136" width="4" height="2" fill="rgb(16,0,0)"/><rect x="229" y="224" width="9" height="2" fill="rgb(28,0,0)"/><rect x="459" y="226" width="9" height="2" fill="rgb(22,0,0)"/><rect x="317" y="130" width="6" height="2" fill="rgb(20,0,0)"/><rect x="264" y="272" width="6" height="2" fill="rgb(30,0,0)"/><rect x="768" y="285" width="9" height="2" fill="rgb(42,0,0)"/><rect x="551" y="259" width="5" height="2" fill="rgb(24,0,0)"/><rect x="732" y="260" width="5" height="2" fill="rgb(28,0,0)"/><rect x="317" y="308" width="5" height="2" fill="rgb(18,0,0)"/><rect x="339" y="258" width="9" height="2" fill="rgb(24,0,0)"/><rect x="512" y="268" width="9" height="2" fill="rgb(14,0,0)"/><rect x="437" y="213" width="6" height="2" fill="rgb(24,0,0)"/><rect x="354" y="148" width="4" height="2" fill="rgb(34,0,0)"/><rect x="725" y="295" width="4" height="2" fill="rgb(30,0,0)"/><rect x="583" y="273" width="5" height="2" fill="rgb(42,0,0)"/><rect x="746" y="304" width="5" height="2" fill="rgb(30,0,0)"/><rect x="733" y="294" width="5" height="2" fill="rgb(26,0,0)"/><rect x="719" y="235" width="6" height="2" fill="rgb(24,0,0)"/><rect x="617" y="297" width="9" height="2" fill="rgb(32,0,0)"/><rect x="668" y="205" width="5" height="2" fill="rgb(16,0,0)"/><rect x="243" y="294" width="5" height="2" fill="rgb(62,0,0)"/><rect x="244" y="135" width="4" height="2" fill="rgb(80,0,0)"/><rect x="254" y="297" width="9" height="2" fill="rgb(50,0,0)"/><rect x="265" y="293" width="4" height="2" fill="rgb(28,0,0)"/><rect x="343" y="149" width="5" height="2" fill="rgb(22,0,0)"/><rect x="284" y="146" width="5" height="2" fill="rgb(34,0,0)"/><rect x="416" y="245" width="4" height="2" fill="rgb(62,0,0)"/><rect x="652" y="280" width="5" height="2" fill="rgb(36,0,0)"/><rect x="644" y="283" width="5" height="2" fill="rgb(22,0,0)"/><rect x="621" y="234" width="9" height="2" fill="rgb(32,0,0)"/><rect x="323" y="127" width="4" height="2" fill="rgb(14,0,0)"/><rect x="502" y="224" width="6" height="2" fill="rgb(30,0,0)"/><rect x="422" y="292" width="5" height="2" fill="rgb(26,0,0)"/><rect x="752" y="173" width="6" height="2" fill="rgb(62,0,0)"/><rect x="541" y="148" width="6" height="2" fill="rgb(16,0,0)"/><rect x="726" y="275" width="5" height="2" fill="rgb(26,0,0)"/><rect x="397" y="212" width="6" height="2" fill="rgb(42,0,0)"/><rect x="358" y="218" width="5" height="2" fill="rgb(30,0,0)"/><rect x="410" y="287" width="5" height="2" fill="rgb(20,0,0)"/><rect x="473" y="280" width="5" height="2" fill="rgb(20,0,0)"/><rect x="587" y="258" width="5" height="2" fill="rgb(62,0,0)"/><rect x="689" y="249" width="5" height="2" fill="rgb(36,0,0)"/><rect x="519" y="159" width="5" height="2" fill="rgb(80,0,0)"/><rect x="783" y="160" width="6" height="2" fill="rgb(22,0,0)"/><rect x="777" y="277" width="5" height="2" fill="rgb(26,0,0)"/><rect x="289" y="239" width="6" height="2" fill="rgb(16,0,0)"/><rect x="235" y="296" width="9" height="2" fill="rgb(42,0,0)"/><rect x="393" y="237" width="4" height="2" fill="rgb(80,0,0)"/><rect x="363" y="275" width="5" height="2" fill="rgb(50,0,0)"/><rect x="631" y="301" width="5" height="2" fill="rgb(42,0,0)"/><rect x="297" y="213" width="6" height="2" fill="rgb(28,0,0)"/><rect x="665" y="269" width="6" height="2" fill="rgb(22,0,0)"/><rect x="482" y="250" width="5" height="2" fill="rgb(14,0,0)"/><rect x="445" y="224" width="5" height="2" fill="rgb(28,0,0)"/><rect x="350" y="269" width="9" height="2" fill="rgb(14,0,0)"/><rect x="284" y="261" width="9" height="2" fill="rgb(14,0,0)"/><rect x="585" y="259" width="6" height="2" fill="rgb(26,0,0)"/><rect x="781" y="163" width="9" height="2" fill="rgb(14,0,0)"/><rect x="584" y="177" width="4" height="2" fill="rgb(18,0,0)"/><rect x="462" y="274" width="9" height="2" fill="rgb(30,0,0)"/><rect x="289" y="187" width="6" height="2" fill="rgb(20,0,0)"/><rect x="346" y="153" width="6" height="2" fill="rgb(42,0,0)"/><rect x="542" y="297" width="6" height="2" fill="rgb(20,0,0)"/><rect x="784" y="270" width="5" height="2" fill="rgb(28,0,0)"/><rect x="377" y="237" width="5" height="2" fill="rgb(22,0,0)"/><rect x="230" y="270" width="5" height="2" fill="rgb(34,0,0)"/><rect x="496" y="269" width="5" height="2" fill="rgb(32,0,0)"/><rect x="705" y="285" width="5" height="2" fill="rgb(24,0,0)"/><rect x="692" y="252" width="5" height="2" fill="rgb(18,0,0)"/><rect x="594" y="177" width="5" height="2" fill="rgb(24,0,0)"/><rect x="661" y="228" width="9" height="2" fill="rgb(24,0,0)"/><rect x="568" y="263" width="9" height="2" fill="rgb(42,0,0)"/><rect x="696" y="166" width="6" height="2" fill="rgb(50,0,0)"/><rect x="721" y="237" width="5" height="2" fill="rgb(22,0,0)"/><rect x="503" y="139" width="6" height="2" fill="rgb(28,0,0)"/><rect x="506" y="234" width="5" height="2" fill="rgb(34,0,0)"/><rect x="489" y="272" width="5" height="2" fill="rgb(18,0,0)"/><rect x="462" y="221" width="4" height="2" fill="rgb(14,0,0)"/><rect x="568" y="294" width="4" height="2" fill="rgb(24,0,0)"/><rect x="498" y="277" width="6" height="2" fill="rgb(42,0,0)"/><rect x="299" y="271" width="6" height="2" fill="rgb(24,0,0)"/><rect x="537" y="239" width="6" height="2" fill="rgb(30,0,0)"/><rect x="537" y="240" width="6" height="2" fill="rgb(34,0,0)"/><rect x="509" y="181" width="6" height="2" fill="rgb(20,0,0)"/><rect x="413" y="190" width="4" height="2" fill="rgb(16,0,0)"/><rect x="631" y="302" width="6" height="2" fill="rgb(32,0,0)"/><rect x="289" y="285" width="9" height="2" fill="rgb(50,0,0)"/><rect x="262" y="261" width="9" height="2" fill="rgb(22,0,0)"/><rect x="578" y="265" width="5" height="2" fill="rgb(16,0,0)"/><rect x="600" y="218" width="5" height="2" fill="rgb(16,0,0)"/><rect x="463" y="147" width="5" height="2" fill="rgb(22,0,0)"/><rect x="667" y="237" width="5" height="2" fill="rgb(18,0,0)"/><rect x="247" y="131" width="6" height="2" fill="rgb(30,0,0)"/><rect x="519" y="281" width="9" height="2" fill="rgb(62,0,0)"/><rect x="741" y="216" width="9" height="2" fill="rgb(30,0,0)"/><rect x="781" y="228" width="9" height="2" fill="rgb(20,0,0)"/><rect x="274" y="220" width="6" height="2" fill="rgb(14,0,0)"/><rect x="233" y="260" width="5" height="2" fill="rgb(20,0,0)"/><rect x="300" y="131" width="6" height="2" fill="rgb(80,0,0)"/><rect x="643" y="310" width="4" height="2" fill="rgb(32,0,0)"/><rect x="579" y="254" width="4" height="2" fill="rgb(62,0,0)"/><rect x="246" y="139" width="6" height="2" fill="rgb(32,0,0)"/><rect x="402" y="296" width="9" height="2" fill="rgb(16,0,0)"/><rect x="404" y="277" width="5" height="2" fill="rgb(22,0,0)"/><rect x="767" y="150" width="6" height="2" fill="rgb(22,0,0)"/><rect x="443" y="295" width="5" height="2" fill="rgb(30,0,0)"/><rect x="262" y="275" width="9" height="2" fill="rgb(80,0,0)"/><rect x="773" y="266" width="9" height="2" fill="rgb(18,0,0)"/><rect x="773" y="248" width="9" height="2" fill="rgb(28,0,0)"/><rect x="679" y="215" width="5" height="2" fill="rgb(18,0,0)"/><rect x="316" y="309" width="5" height="2" fill="rgb(22,0,0)"/><rect x="681" y="264" width="9" height="2" fill="rgb(50,0,0)"/><rect x="662" y="260" width="6" height="2" fill="rgb(26,0,0)"/><rect x="668" y="298" width="9" height="2" fill="rgb(16,0,0)"/><rect x="606" y="233" width="9" height="2" fill="rgb(14,0,0)"/><rect x="670" y="222" width="4" height="2" fill="rgb(28,0,0)"/><rect x="450" y="237" width="6" height="2" fill="rgb(24,0,0)"/><rect x="557" y="164" width="5" height="2" fill="rgb(14,0,0)"/><rect x="550" y="198" width="5" height="2" fill="rgb(16,0,0)"/><rect x="743" y="289" width="6" height="2" fill="rgb(18,0,0)"/><rect x="315" y="245" width="4" height="2" fill="rgb(16,0,0)"/><rect x="342" y="299" width="5" height="2" fill="rgb(30,0,0)"/><rect x="466" y="314" width="5" height="2" fill="rgb(16,0,0)"/><rect x="417" y="324" width="4" height="2" fill="rgb(16,0,0)"/><rect x="539" y="299" width="9" height="2" fill="rgb(42,0,0)"/><rect x="450" y="297" width="5" height="2" fill="rgb(30,0,0)"/><rect x="358" y="293" width="5" height="2" fill="rgb(20,0,0)"/><rect x="702" y="200" width="5" height="2" fill="rgb(16,0,0)"/><rect x="753" y="313" width="4" height="2" fill="rgb(30,0,0)"/><rect x="667" y="270" width="4" height="2" fill="rgb(20,0,0)"/><rect x="309" y="295" width="9" height="2" fill="rgb(30,0,0)"/><rect x="474" y="255" width="5" height="2" fill="rgb(16,0,0)"/><rect x="297" y="222" width="5" height="2" fill="rgb(50,0,0)"/><rect x="726" y="220" width="5" height="2" fill="rgb(28,0,0)"/><rect x="271" y="249" width="6" height="2" fill="rgb(20,0,0)"/><rect x="745" y="203" width="6" height="2" fill="rgb(34,0,0)"/><rect x="408" y="225" width="5" height="2" fill="rgb(34,0,0)"/><rect x="352" y="138" width="6" height="2" fill="rgb(22,0,0)"/><rect x="377" y="228" width="9" height="2" fill="rgb(32,0,0)"/><rect x="415" y="257" width="6" height="2" fill="rgb(22,0,0)"/><rect x="292" y="321" width="9" height="2" fill="rgb(22,0,0)"/><rect x="694" y="279" width="6" height="2" fill="rgb(30,0,0)"/><rect x="784" y="223" width="6" height="2" fill="rgb(24,0,0)"/><rect x="260" y="271" width="6" height="2" fill="rgb(24,0,0)"/><rect x="418" y="215" width="5" height="2" fill="rgb(14,0,0)"/><rect x="471" y="308" width="5" height="2" fill="rgb(24,0,0)"/><rect x="519" y="173" width="4" height="2" fill="rgb(36,0,0)"/><rect x="636" y="278" width="9" height="2" fill="rgb(50,0,0)"/><rect x="623" y="288" width="4" height="2" fill="rgb(18,0,0)"/><rect x="614" y="230" width="9" height="2" fill="rgb(14,0,0)"/><rect x="415" y="288" width="4" height="2" fill="rgb(14,0,0)"/><rect x="457" y="226" width="5" height="2" fill="rgb(24,0,0)"/><rect x="542" y="218" width="9" height="2" fill="rgb(36,0,0)"/><rect x="707" y="198" width="4" height="2" fill="rgb(14,0,0)"/><rect x="627" y="289" width="6" height="2" fill="rgb(30,0,0)"/><rect x="647" y="289" width="6" height="2" fill="rgb(24,0,0)"/><rect x="242" y="286" width="4" height="2" fill="rgb(28,0,0)"/><rect x="573" y="160" width="4" height="2" fill="rgb(20,0,0)"/><rect x="745" y="237" width="9" height="2" fill="rgb(28,0,0)"/><rect x="620" y="147" width="4" height="2" fill="rgb(30,0,0)"/><rect x="297" y="258" width="4" height="2" fill="rgb(20,0,0)"/><rect x="296" y="302" width="5" height="2" fill="rgb(22,0,0)"/><rect x="601" y="218" width="6" height="2" fill="rgb(62,0,0)"/><rect x="463" y="260" width="4" height="2" fill="rgb(14,0,0)"/><rect x="417" y="243" width="9" height="2" fill="rgb(34,0,0)"/><rect x="683" y="295" width="5" height="2" fill="rgb(28,0,0)"/><rect x="714" y="258" width="9" height="2" fill="rgb(24,0,0)"/><rect x="267" y="213" width="5" height="2" fill="rgb(22,0,0)"/><rect x="463" y="300" width="4" height="2" fill="rgb(16,0,0)"/><rect x="247" y="238" width="9" height="2" fill="rgb(16,0,0)"/><rect x="575" y="259" width="5" height="2" fill="rgb(16,0,0)"/><rect x="388" y="187" width="4" height="2" fill="rgb(36,0,0)"/><rect x="763" y="309" width="6" height="2" fill="rgb(30,0,0)"/><rect x="526" y="156" width="5" height="2" fill="rgb(18,0,0)"/><rect x="550" y="278" width="6" height="2" fill="rgb(36,0,0)"/><rect x="616" y="248" width="6" height="2" fill="rgb(28,0,0)"/><rect x="397" y="222" width="5" height="2" fill="rgb(34,0,0)"/><rect x="352" y="248" width="4" height="2" fill="rgb(14,0,0)"/><rect x="319" y="243" width="6" height="2" fill="rgb(30,0,0)"/><rect x="387" y="323" width="5" height="2" fill="rgb(28,0,0)"/><rect x="265" y="300" width="9" height="2" fill="rgb(16,0,0)"/><rect x="694" y="197" width="5" height="2" fill="rgb(18,0,0)"/><rect x="416" y="272" width="9" height="2" fill="rgb(20,0,0)"/><rect x="640" y="280" width="5" height="2" fill="rgb(42,0,0)"/><rect x="623" y="308" width="4" height="2" fill="rgb(18,0,0)"/><rect x="655" y="243" width="6" height="2" fill="rgb(30,0,0)"/><rect x="715" y="247" width="6" height="2" fill="rgb(32,0,0)"/><rect x="631" y="248" width="5" height="2" fill="rgb(14,0,0)"/><rect x="667" y="257" width="5" height="2" fill="rgb(24,0,0)"/><rect x="528" y="252" width="9" height="2" fill="rgb(28,0,0)"/><rect x="277" y="309" width="5" height="2" fill="rgb(26,0,0)"/><rect x="770" y="303" width="4" height="2" fill="rgb(30,0,0)"/><rect x="543" y="293" width="9" height="2" fill="rgb(36,0,0)"/><rect x="784" y="259" width="6" height="2" fill="rgb(20,0,0)"/><rect x="428" y="245" width="4" height="2" fill="rgb(24,0,0)"/><rect x="356" y="208" width="5" height="2" fill="rgb(18,0,0)"/><rect x="500" y="268" width="9" height="2" fill="rgb(80,0,0)"/><rect x="683" y="161" width="5" height="2" fill="rgb(24,0,0)"/><rect x="326" y="240" width="9" height="2" fill="rgb(18,0,0)"/><rect x="580" y="231" width="9" height="2" fill="rgb(26,0,0)"/><rect x="458" y="139" width="5" height="2" fill="rgb(30,0,0)"/><rect x="783" y="219" width="4" height="2" fill="rgb(14,0,0)"/><rect x="399" y="215" width="6" height="2" fill="rgb(20,0,0)"/><rect x="555" y="232" width="9" height="2" fill="rgb(30,0,0)"/><rect x="376" y="255" width="9" height="2" fill="rgb(26,0,0)"/><rect x="457" y="151" width="4" height="2" fill="rgb(20,0,0)"/><rect x="270" y="257" width="9" height="2" fill="rgb(18,0,0)"/><rect x="678" y="216" width="5" height="2" fill="rgb(62,0,0)"/><rect x="361" y="182" width="9" height="2" fill="rgb(18,0,0)"/><rect x="423" y="216" width="5" height="2" fill="rgb(16,0,0)"/><rect x="553" y="317" width="5" height="2" fill="rgb(28,0,0)"/><rect x="253" y="288" width="4" height="2" fill="rgb(20,0,0)"/><rect x="397" y="297" width="4" height="2" fill="rgb(28,0,0)"/><rect x="606" y="265" width="5" height="2" fill="rgb(16,0,0)"/><rect x="716" y="223" width="4" height="2" fill="rgb(24,0,0)"/><rect x="323" y="216" width="6" height="2" fill="rgb(28,0,0)"/><rect x="431" y="289" width="6" height="2" fill="rgb(42,0,0)"/><rect x="265" y="285" width="9" height="2" fill="rgb(28,0,0)"/><rect x="444" y="244" width="4" height="2" fill="rgb(30,0,0)"/><rect x="599" y="195" width="4" height="2" fill="rgb(26,0,0)"/><rect x="378" y="226" width="6" height="2" fill="rgb(28,0,0)"/><rect x="317" y="276" width="9" height="2" fill="rgb(26,0,0)"/><rect x="394" y="232" width="5" height="2" fill="rgb(62,0,0)"/><rect x="781" y="252" width="9" height="2" fill="rgb(28,0,0)"/><rect x="454" y="228" width="9" height="2" fill="rgb(18,0,0)"/><rect x="531" y="281" width="4" height="2" fill="rgb(50,0,0)"/><rect x="629" y="156" width="5" height="2" fill="rgb(28,0,0)"/><rect x="407" y="224" width="9" height="2" fill="rgb(32,0,0)"/><rect x="336" y="222" width="5" height="2" fill="rgb(62,0,0)"/><rect x="451" y="287" width="5" height="2" fill="rgb(30,0,0)"/><rect x="326" y="283" width="6" height="2" fill="rgb(14,0,0)"/><rect x="596" y="236" width="5" height="2" fill="rgb(42,0,0)"/><rect x="283" y="185" width="4" height="2" fill="rgb(16,0,0)"/><rect x="250" y="232" width="5" height="2" fill="rgb(16,0,0)"/><rect x="640" y="236" width="9" height="2" fill="rgb(28,0,0)"/><rect x="546" y="237" width="9" height="2" fill="rgb(14,0,0)"/><rect x="750" y="280" width="4" height="2" fill="rgb(30,0,0)"/><rect x="567" y="136" width="4" height="2" fill="rgb(34,0,0)"/><rect x="345" y="308" width="6" height="2" fill="rgb(62,0,0)"/><rect x="643" y="325" width="5" height="2" fill="rgb(24,0,0)"/><rect x="278" y="251" width="9" height="2" fill="rgb(80,0,0)"/><rect x="612" y="293" width="5" height="2" fill="rgb(18,0,0)"/><rect x="604" y="281" width="5" height="2" fill="rgb(16,0,0)"/><rect x="759" y="290" width="9" height="2" fill="rgb(24,0,0)"/><rect x="769" y="253" width="4" height="2" fill="rgb(24,0,0)"/><rect x="428" y="232" width="5" height="2" fill="rgb(22,0,0)"/><rect x="611" y="223" width="4" height="2" fill="rgb(24,0,0)"/><rect x="614" y="269" width="5" height="2" fill="rgb(62,0,0)"/><rect x="307" y="239" width="9" height="2" fill="rgb(18,0,0)"/><rect x="652" y="272" width="6" height="2" fill="rgb(26,0,0)"/><rect x="292" y="184" width="4" height="2" fill="rgb(16,0,0)"/><rect x="728" y="224" width="6" height="2" fill="rgb(20,0,0)"/><rect x="318" y="263" width="5" height="2" fill="rgb(28,0,0)"/><rect x="268" y="299" width="4" height="2" fill="rgb(80,0,0)"/><rect x="628" y="321" width="6" height="2" fill="rgb(18,0,0)"/><rect x="500" y="242" width="4" height="2" fill="rgb(42,0,0)"/><rect x="388" y="277" width="5" height="2" fill="rgb(18,0,0)"/><rect x="305" y="132" width="5" height="2" fill="rgb(14,0,0)"/><rect x="332" y="253" width="4" height="2" fill="rgb(80,0,0)"/><rect x="691" y="274" width="5" height="2" fill="rgb(34,0,0)"/><rect x="356" y="293" width="5" height="2" fill="rgb(16,0,0)"/><rect x="251" y="268" width="4" height="2" fill="rgb(26,0,0)"/><rect x="504" y="228" width="9" height="2" fill="rgb(30,0,0)"/><rect x="578" y="155" width="6" height="2" fill="rgb(42,0,0)"/><rect x="769" y="218" width="6" height="2" fill="rgb(26,0,0)"/><rect x="350" y="218" width="5" height="2" fill="rgb(32,0,0)"/><rect x="268" y="275" width="4" height="2" fill="rgb(20,0,0)"/><rect x="233" y="316" width="6" height="2" fill="rgb(32,0,0)"/><rect x="230" y="286" width="6" height="2" fill="rgb(18,0,0)"/><rect x="531" y="229" width="6" height="2" fill="rgb(36,0,0)"/><rect x="574" y="220" width="9" height="2" fill="rgb(50,0,0)"/><rect x="394" y="296" width="5" height="2" fill="rgb(32,0,0)"/><rect x="711" y="232" width="5" height="2" fill="rgb(50,0,0)"/><rect x="641" y="227" width="9" height="2" fill="rgb(30,0,0)"/><rect x="754" y="235" width="6" height="2" fill="rgb(30,0,0)"/><rect x="292" y="163" width="5" height="2" fill="rgb(30,0,0)"/><rect x="591" y="272" width="5" height="2" fill="rgb(28,0,0)"/><rect x="484" y="234" width="6" height="2" fill="rgb(50,0,0)"/><rect x="269" y="214" width="9" height="2" fill="rgb(20,0,0)"/><rect x="485" y="263" width="9" height="2" fill="rgb(22,0,0)"/><rect x="660" y="154" width="6" height="2" fill="rgb(28,0,0)"/><rect x="254" y="135" width="6" height="2" fill="rgb(32,0,0)"/><rect x="295" y="154" width="9" height="2" fill="rgb(26,0,0)"/><rect x="542" y="309" width="5" height="2" fill="rgb(80,0,0)"/><rect x="698" y="286" width="5" height="2" fill="rgb(20,0,0)"/><rect x="362" y="260" width="6" height="2" fill="rgb(16,0,0)"/><rect x="684" y="245" width="9" height="2" fill="rgb(20,0,0)"/><rect x="247" y="236" width="5" height="2" fill="rgb(62,0,0)"/><rect x="477" y="293" width="4" height="2" fill="rgb(22,0,0)"/><rect x="290" y="231" width="6" height="2" fill="rgb(22,0,0)"/><rect x="556" y="300" width="6" height="2" fill="rgb(14,0,0)"/><rect x="242" y="256" width="4" height="2" fill="rgb(16,0,0)"/><rect x="270" y="270" width="6" height="2" fill="rgb(24,0,0)"/><rect x="615" y="216" width="5" height="2" fill="rgb(34,0,0)"/><rect x="523" y="189" width="5" height="2" fill="rgb(24,0,0)"/><rect x="685" y="243" width="6" height="2" fill="rgb(14,0,0)"/><rect x="403" y="193" width="4" height="2" fill="rgb(28,0,0)"/><rect x="484" y="322" width="5" height="2" fill="rgb(30,0,0)"/><rect x="443" y="299" width="9" height="2" fill="rgb(30,0,0)"/><rect x="523" y="316" width="9" height="2" fill="rgb(20,0,0)"/><rect x="715" y="280" width="5" height="2" fill="rgb(32,0,0)"/><rect x="671" y="174" width="4" height="2" fill="rgb(32,0,0)"/><rect x="765" y="195" width="5" height="2" fill="rgb(28,0,0)"/><rect x="627" y="275" width="6" height="2" fill="rgb(24,0,0)"/><rect x="433" y="235" width="5" height="2" fill="rgb(22,0,0)"/><rect x="343" y="272" width="6" height="2" fill="rgb(16,0,0)"/><rect x="545" y="187" width="5" height="2" fill="rgb(32,0,0)"/><rect x="630" y="264" width="4" height="2" fill="rgb(26,0,0)"/><rect x="554" y="230" width="6" height="2" fill="rgb(14,0,0)"/><rect x="770" y="264" width="6" height="2" fill="rgb(34,0,0)"/><rect x="730" y="182" width="5" height="2" fill="rgb(42,0,0)"/><rect x="378" y="234" width="6" height="2" fill="rgb(26,0,0)"/><rect x="726" y="183" width="5" height="2" fill="rgb(28,0,0)"/><rect x="638" y="318" width="4" height="2" fill="rgb(30,0,0)"/><rect x="418" y="154" width="5" height="2" fill="rgb(14,0,0)"/><rect x="346" y="279" width="6" height="2" fill="rgb(36,0,0)"/><rect x="607" y="220" width="4" height="2" fill="rgb(18,0,0)"/><rect x="577" y="257" width="5" height="2" fill="rgb(20,0,0)"/><rect x="715" y="242" width="4" height="2" fill="rgb(18,0,0)"/><rect x="571" y="270" width="4" height="2" fill="rgb(22,0,0)"/><rect x="345" y="286" width="5" height="2" fill="rgb(18,0,0)"/><rect x="420" y="262" width="9" height="2" fill="rgb(30,0,0)"/><rect x="413" y="237" width="4" height="2" fill="rgb(42,0,0)"/><rect x="401" y="298" width="9" height="2" fill="rgb(30,0,0)"/><rect x="430" y="238" width="4" height="2" fill="rgb(28,0,0)"/><rect x="493" y="281" width="5" height="2" fill="rgb(42,0,0)"/><rect x="355" y="277" width="9" height="2" fill="rgb(22,0,0)"/><rect x="296" y="235" width="5" height="2" fill="rgb(36,0,0)"/><rect x="432" y="157" width="9" height="2" fill="rgb(14,0,0)"/><rect x="424" y="253" width="5" height="2" fill="rgb(42,0,0)"/><rect x="737" y="305" width="5" height="2" fill="rgb(14,0,0)"/><rect x="288" y="221" width="5" height="2" fill="rgb(16,0,0)"/><rect x="355" y="292" width="5" height="2" fill="rgb(14,0,0)"/><rect x="369" y="179" width="5" height="2" fill="rgb(26,0,0)"/><rect x="410" y="239" width="5" height="2" fill="rgb(30,0,0)"/><rect x="669" y="294" width="5" height="2" fill="rgb(32,0,0)"/><rect x="386" y="193" width="5" height="2" fill="rgb(34,0,0)"/><rect x="609" y="245" width="5" height="2" fill="rgb(80,0,0)"/><rect x="429" y="281" width="6" height="2" fill="rgb(22,0,0)"/><rect x="783" y="186" width="5" height="2" fill="rgb(14,0,0)"/><rect x="302" y="258" width="4" height="2" fill="rgb(24,0,0)"/><rect x="487" y="250" width="5" height="2" fill="rgb(16,0,0)"/><rect x="555" y="167" width="4" height="2" fill="rgb(22,0,0)"/><rect x="510" y="173" width="4" height="2" fill="rgb(16,0,0)"/><rect x="781" y="190" width="6" height="2" fill="rgb(22,0,0)"/><rect x="521" y="128" width="9" height="2" fill="rgb(24,0,0)"/><rect x="782" y="232" width="5" height="2" fill="rgb(26,0,0)"/><rect x="704" y="319" width="5" height="2" fill="rgb(62,0,0)"/><rect x="327" y="179" width="5" height="2" fill="rgb(24,0,0)"/><rect x="255" y="296" width="4" height="2" fill="rgb(34,0,0)"/><rect x="612" y="261" width="6" height="2" fill="rgb(80,0,0)"/><rect x="629" y="242" width="6" height="2" fill="rgb(22,0,0)"/><rect x="444" y="203" width="4" height="2" fill="rgb(28,0,0)"/><rect x="567" y="237" width="5" height="2" fill="rgb(26,0,0)"/><rect x="598" y="144" width="4" height="2" fill="rgb(16,0,0)"/><rect x="615" y="270" width="6" height="2" fill="rgb(30,0,0)"/><rect x="229" y="288" width="9" height="2" fill="rgb(28,0,0)"/><rect x="783" y="269" width="5" height="2" fill="rgb(62,0,0)"/><rect x="264" y="238" width="4" height="2" fill="rgb(42,0,0)"/><rect x="673" y="294" width="5" height="2" fill="rgb(22,0,0)"/><rect x="707" y="196" width="5" height="2" fill="rgb(18,0,0)"/><rect x="745" y="232" width="5" height="2" fill="rgb(28,0,0)"/><rect x="604" y="157" width="4" height="2" fill="rgb(34,0,0)"/><rect x="441" y="292" width="6" height="2" fill="rgb(22,0,0)"/><rect x="620" y="246" width="6" height="2" fill="rgb(50,0,0)"/><rect x="277" y="205" width="6" height="2" fill="rgb(42,0,0)"/><rect x="495" y="285" width="4" height="2" fill="rgb(50,0,0)"/><rect x="301" y="271" width="9" height="2" fill="rgb(34,0,0)"/><rect x="675" y="177" width="9" height="2" fill="rgb(30,0,0)"/><rect x="260" y="276" width="5" height="2" fill="rgb(30,0,0)"/><rect x="363" y="223" width="4" height="2" fill="rgb(26,0,0)"/><rect x="300" y="240" width="4" height="2" fill="rgb(62,0,0)"/><rect x="475" y="276" width="6" height="2" fill="rgb(18,0,0)"/><rect x="590" y="245" width="9" height="2" fill="rgb(22,0,0)"/><rect x="744" y="298" width="4" height="2" fill="rgb(50,0,0)"/><rect x="341" y="222" width="6" height="2" fill="rgb(16,0,0)"/><rect x="521" y="225" width="4" height="2" fill="rgb(30,0,0)"/><rect x="542" y="275" width="6" height="2" fill="rgb(22,0,0)"/><rect x="326" y="140" width="9" height="2" fill="rgb(14,0,0)"/><rect x="602" y="274" width="5" height="2" fill="rgb(28,0,0)"/><rect x="412" y="204" width="5" height="2" fill="rgb(18,0,0)"/><rect x="547" y="130" width="9" height="2" fill="rgb(20,0,0)"/><rect x="259" y="275" width="4" height="2" fill="rgb(28,0,0)"/><rect x="614" y="265" width="4" height="2" fill="rgb(42,0,0)"/><rect x="309" y="193" width="5" height="2" fill="rgb(28,0,0)"/><rect x="381" y="242" width="5" height="2" fill="rgb(28,0,0)"/><rect x="448" y="273" width="5" height="2" fill="rgb(28,0,0)"/><rect x="712" y="288" width="5" height="2" fill="rgb(26,0,0)"/><rect x="302" y="270" width="6" height="2" fill="rgb(62,0,0)"/><rect x="554" y="199" width="6" height="2" fill="rgb(62,0,0)"/><rect x="538" y="137" width="6" height="2" fill="rgb(30,0,0)"/><rect x="687" y="234" width="5" height="2" fill="rgb(26,0,0)"/><rect x="624" y="265" width="6" height="2" fill="rgb(80,0,0)"/><rect x="476" y="220" width="4" height="2" fill="rgb(16,0,0)"/><rect x="304" y="284" width="5" height="2" fill="rgb(14,0,0)"/><rect x="743" y="283" width="5" height="2" fill="rgb(50,0,0)"/><rect x="630" y="275" width="5" height="2" fill="rgb(62,0,0)"/><rect x="343" y="147" width="4" height="2" fill="rgb(18,0,0)"/><rect x="353" y="275" width="6" height="2" fill="rgb(22,0,0)"/><rect x="712" y="310" width="6" height="2" fill="rgb(32,0,0)"/><rect x="651" y="300" width="5" height="2" fill="rgb(30,0,0)"/><rect x="409" y="294" width="6" height="2" fill="rgb(16,0,0)"/><rect x="411" y="158" width="5" height="2" fill="rgb(20,0,0)"/><rect x="311" y="243" width="4" height="2" fill="rgb(16,0,0)"/><rect x="690" y="151" width="5" height="2" fill="rgb(22,0,0)"/><rect x="422" y="276" width="5" height="2" fill="rgb(22,0,0)"/><rect x="384" y="187" width="5" height="2" fill="rgb(22,0,0)"/><rect x="491" y="279" width="9" height="2" fill="rgb(32,0,0)"/><rect x="246" y="297" width="5" height="2" fill="rgb(22,0,0)"/><rect x="594" y="243" width="6" height="2" fill="rgb(28,0,0)"/><rect x="412" y="224" width="4" height="2" fill="rgb(80,0,0)"/><rect x="540" y="146" width="9" height="2" fill="rgb(16,0,0)"/><rect x="485" y="134" width="6" height="2" fill="rgb(42,0,0)"/><rect x="617" y="209" width="5" height="2" fill="rgb(80,0,0)"/><rect x="598" y="159" width="5" height="2" fill="rgb(14,0,0)"/><rect x="698" y="300" width="5" height="2" fill="rgb(20,0,0)"/><rect x="287" y="228" width="9" height="2" fill="rgb(28,0,0)"/><rect x="294" y="220" width="9" height="2" fill="rgb(30,0,0)"/><rect x="433" y="166" width="5" height="2" fill="rgb(28,0,0)"/><rect x="633" y="233" width="4" height="2" fill="rgb(20,0,0)"/><rect x="754" y="224" width="5" height="2" fill="rgb(18,0,0)"/><rect x="647" y="157" width="6" height="2" fill="rgb(16,0,0)"/><rect x="576" y="149" width="4" height="2" fill="rgb(50,0,0)"/><rect x="551" y="173" width="5" height="2" fill="rgb(18,0,0)"/><rect x="562" y="322" width="5" height="2" fill="rgb(34,0,0)"/><rect x="275" y="277" width="4" height="2" fill="rgb(34,0,0)"/><rect x="753" y="209" width="5" height="2" fill="rgb(22,0,0)"/><rect x="637" y="228" width="5" height="2" fill="rgb(26,0,0)"/><rect x="339" y="170" width="4" height="2" fill="rgb(22,0,0)"/><rect x="249" y="231" width="9" height="2" fill="rgb(42,0,0)"/><rect x="263" y="219" width="6" height="2" fill="rgb(18,0,0)"/><rect x="591" y="265" width="6" height="2" fill="rgb(22,0,0)"/><rect x="373" y="264" width="6" height="2" fill="rgb(50,0,0)"/><rect x="557" y="285" width="9" height="2" fill="rgb(28,0,0)"/><rect x="594" y="221" width="5" height="2" fill="rgb(28,0,0)"/><rect x="338" y="235" width="9" height="2" fill="rgb(50,0,0)"/><rect x="724" y="271" width="5" height="2" fill="rgb(16,0,0)"/><rect x="455" y="270" width="9" height="2" fill="rgb(18,0,0)"/><rect x="670" y="128" width="4" height="2" fill="rgb(22,0,0)"/><rect x="462" y="254" width="9" height="2" fill="rgb(26,0,0)"/><rect x="274" y="205" width="5" height="2" fill="rgb(34,0,0)"/><rect x="277" y="275" width="6" height="2" fill="rgb(50,0,0)"/><rect x="528" y="175" width="6" height="2" fill="rgb(24,0,0)"/><rect x="445" y="193" width="5" height="2" fill="rgb(14,0,0)"/><rect x="725" y="291" width="5" height="2" fill="rgb(22,0,0)"/><rect x="406" y="300" width="5" height="2" fill="rgb(16,0,0)"/><rect x="522" y="127" width="6" height="2" fill="rgb(30,0,0)"/><rect x="680" y="177" width="9" height="2" fill="rgb(80,0,0)"/><rect x="709" y="247" width="6" height="2" fill="rgb(18,0,0)"/><rect x="515" y="238" width="5" height="2" fill="rgb(32,0,0)"/><rect x="597" y="252" width="6" height="2" fill="rgb(22,0,0)"/><rect x="431" y="320" width="9" height="2" fill="rgb(16,0,0)"/><rect x="478" y="291" width="4" height="2" fill="rgb(34,0,0)"/><rect x="497" y="295" width="5" height="2" fill="rgb(26,0,0)"/><rect x="556" y="219" width="5" height="2" fill="rgb(80,0,0)"/><rect x="557" y="321" width="5" height="2" fill="rgb(28,0,0)"/><rect x="242" y="236" width="6" height="2" fill="rgb(22,0,0)"/><rect x="765" y="274" width="5" height="2" fill="rgb(24,0,0)"/><rect x="693" y="219" width="5" height="2" fill="rgb(26,0,0)"/><rect x="516" y="301" width="5" height="2" fill="rgb(16,0,0)"/><rect x="556" y="281" width="5" height="2" fill="rgb(30,0,0)"/><rect x="401" y="232" width="6" height="2" fill="rgb(16,0,0)"/><rect x="289" y="248" width="6" height="2" fill="rgb(30,0,0)"/><rect x="291" y="268" width="5" height="2" fill="rgb(34,0,0)"/><rect x="253" y="261" width="4" height="2" fill="rgb(30,0,0)"/><rect x="447" y="249" width="4" height="2" fill="rgb(30,0,0)"/><rect x="479" y="260" width="5" height="2" fill="rgb(36,0,0)"/><rect x="752" y="180" width="9" height="2" fill="rgb(20,0,0)"/><rect x="649" y="261" width="5" height="2" fill="rgb(24,0,0)"/><rect x="588" y="319" width="6" height="2" fill="rgb(16,0,0)"/><rect x="698" y="286" width="6" height="2" fill="rgb(22,0,0)"/><rect x="678" y="196" width="9" height="2" fill="rgb(80,0,0)"/><rect x="519" y="260" width="5" height="2" fill="rgb(34,0,0)"/><rect x="609" y="310" width="9" height="2" fill="rgb(50,0,0)"/><rect x="359" y="233" width="5" height="2" fill="rgb(22,0,0)"/><rect x="352" y="295" width="5" height="2" fill="rgb(16,0,0)"/><rect x="643" y="270" width="5" height="2" fill="rgb(42,0,0)"/><rect x="621" y="267" width="4" height="2" fill="rgb(36,0,0)"/><rect x="566" y="228" width="5" height="2" fill="rgb(20,0,0)"/><rect x="429" y="240" width="5" height="2" fill="rgb(14,0,0)"/><rect x="618" y="286" width="5" height="2" fill="rgb(14,0,0)"/><rect x="483" y="278" width="6" height="2" fill="rgb(30,0,0)"/><rect x="538" y="218" width="4" height="2" fill="rgb(22,0,0)"/><rect x="353" y="244" width="9" height="2" fill="rgb(30,0,0)"/><rect x="357" y="285" width="9" height="2" fill="rgb(28,0,0)"/><rect x="626" y="230" width="6" height="2" fill="rgb(14,0,0)"/><rect x="263" y="252" width="6" height="2" fill="rgb(16,0,0)"/><rect x="514" y="244" width="5" height="2" fill="rgb(28,0,0)"/><rect x="412" y="221" width="9" height="2" fill="rgb(22,0,0)"/><rect x="469" y="290" width="5" height="2" fill="rgb(34,0,0)"/><rect x="572" y="149" width="4" height="2" fill="rgb(80,0,0)"/><rect x="729" y="130" width="5" height="2" fill="rgb(26,0,0)"/><rect x="541" y="266" width="9" height="2" fill="rgb(80,0,0)"/><rect x="237" y="251" width="9" height="2" fill="rgb(14,0,0)"/><rect x="578" y="242" width="5" height="2" fill="rgb(20,0,0)"/><rect x="253" y="162" width="6" height="2" fill="rgb(20,0,0)"/><rect x="419" y="246" width="6" height="2" fill="rgb(18,0,0)"/><rect x="737" y="284" width="4" height="2" fill="rgb(24,0,0)"/><rect x="542" y="233" width="4" height="2" fill="rgb(26,0,0)"/><rect x="624" y="298" width="6" height="2" fill="rgb(24,0,0)"/><rect x="681" y="294" width="4" height="2" fill="rgb(26,0,0)"/><rect x="634" y="232" width="6" height="2" fill="rgb(16,0,0)"/><rect x="342" y="293" width="5" height="2" fill="rgb(36,0,0)"/><rect x="540" y="218" width="4" height="2" fill="rgb(28,0,0)"/><rect x="342" y="197" width="9" height="2" fill="rgb(22,0,0)"/><rect x="755" y="264" width="4" height="2" fill="rgb(30,0,0)"/><rect x="632" y="255" width="5" height="2" fill="rgb(62,0,0)"/><rect x="590" y="264" width="4" height="2" fill="rgb(22,0,0)"/><rect x="562" y="139" width="4" height="2" fill="rgb(16,0,0)"/><rect x="544" y="275" width="5" height="2" fill="rgb(20,0,0)"/><rect x="735" y="215" width="4" height="2" fill="rgb(16,0,0)"/><rect x="362" y="311" width="9" height="2" fill="rgb(42,0,0)"/><rect x="551" y="219" width="4" height="2" fill="rgb(22,0,0)"/><rect x="650" y="148" width="5" height="2" fill="rgb(22,0,0)"/><rect x="678" y="159" width="9" height="2" fill="rgb(16,0,0)"/><rect x="739" y="127" width="9" height="2" fill="rgb(28,0,0)"/><rect x="574" y="245" width="4" height="2" fill="rgb(50,0,0)"/><rect x="532" y="185" width="9" height="2" fill="rgb(80,0,0)"/><rect x="344" y="258" width="5" height="2" fill="rgb(20,0,0)"/><rect x="623" y="273" width="9" height="2" fill="rgb(18,0,0)"/><rect x="533" y="197" width="4" height="2" fill="rgb(18,0,0)"/><rect x="433" y="187" width="6" height="2" fill="rgb(36,0,0)"/><rect x="550" y="193" width="4" height="2" fill="rgb(16,0,0)"/><rect x="291" y="266" width="6" height="2" fill="rgb(18,0,0)"/><rect x="743" y="241" width="4" height="2" fill="rgb(16,0,0)"/><rect x="628" y="273" width="4" height="2" fill="rgb(24,0,0)"/><rect x="573" y="185" width="5" height="2" fill="rgb(32,0,0)"/><rect x="700" y="133" width="6" height="2" fill="rgb(24,0,0)"/><rect x="775" y="294" width="5" height="2" fill="rgb(28,0,0)"/><rect x="235" y="244" width="5" height="2" fill="rgb(14,0,0)"/><rect x="658" y="280" width="9" height="2" fill="rgb(24,0,0)"/><rect x="287" y="242" width="5" height="2" fill="rgb(18,0,0)"/><rect x="528" y="318" width="9" height="2" fill="rgb(28,0,0)"/><rect x="751" y="208" width="5" height="2" fill="rgb(26,0,0)"/><rect x="388" y="216" width="6" height="2" fill="rgb(62,0,0)"/><rect x="294" y="315" width="5" height="2" fill="rgb(16,0,0)"/><rect x="367" y="178" width="5" height="2" fill="rgb(36,0,0)"/><rect x="766" y="254" width="9" height="2" fill="rgb(18,0,0)"/><rect x="616" y="187" width="9" height="2" fill="rgb(14,0,0)"/><rect x="269" y="262" width="9" height="2" fill="rgb(62,0,0)"/><rect x="718" y="309" width="5" height="2" fill="rgb(32,0,0)"/><rect x="448" y="265" width="6" height="2" fill="rgb(34,0,0)"/><rect x="408" y="168" width="4" height="2" fill="rgb(26,0,0)"/><rect x="676" y="260" width="5" height="2" fill="rgb(18,0,0)"/><rect x="733" y="271" width="5" height="2" fill="rgb(24,0,0)"/><rect x="253" y="222" width="6" height="2" fill="rgb(30,0,0)"/><rect x="592" y="240" width="5" height="2" fill="rgb(14,0,0)"/><rect x="378" y="295" width="5" height="2" fill="rgb(28,0,0)"/><rect x="631" y="282" width="5" height="2" fill="rgb(14,0,0)"/><rect x="321" y="258" width="5" height="2" fill="rgb(16,0,0)"/><rect x="748" y="133" width="6" height="2" fill="rgb(14,0,0)"/><rect x="362" y="304" width="4" height="2" fill="rgb(20,0,0)"/><rect x="598" y="293" width="6" height="2" fill="rgb(20,0,0)"/><rect x="500" y="262" width="4" height="2" fill="rgb(16,0,0)"/><rect x="294" y="222" width="6" height="2" fill="rgb(20,0,0)"/><rect x="262" y="238" width="6" height="2" fill="rgb(28,0,0)"/><rect x="751" y="237" width="6" height="2" fill="rgb(80,0,0)"/><rect x="348" y="300" width="4" height="2" fill="rgb(16,0,0)"/><rect x="755" y="231" width="9" height="2" fill="rgb(34,0,0)"/><rect x="347" y="238" width="5" height="2" fill="rgb(18,0,0)"/><rect x="678" y="223" width="5" height="2" fill="rgb(18,0,0)"/><rect x="295" y="322" width="9" height="2" fill="rgb(14,0,0)"/><rect x="578" y="292" width="4" height="2" fill="rgb(28,0,0)"/><rect x="590" y="280" width="5" height="2" fill="rgb(22,0,0)"/><rect x="444" y="303" width="5" height="2" fill="rgb(50,0,0)"/><rect x="732" y="234" width="4" height="2" fill="rgb(20,0,0)"/><rect x="349" y="134" width="5" height="2" fill="rgb(32,0,0)"/><rect x="646" y="295" width="4" height="2" fill="rgb(50,0,0)"/><rect x="320" y="198" width="6" height="2" fill="rgb(14,0,0)"/><rect x="514" y="315" width="9" height="2" fill="rgb(26,0,0)"/><rect x="335" y="241" width="5" height="2" fill="rgb(28,0,0)"/><rect x="772" y="277" width="5" height="2" fill="rgb(18,0,0)"/><rect x="601" y="132" width="5" height="2" fill="rgb(14,0,0)"/><rect x="314" y="267" width="9" height="2" fill="rgb(28,0,0)"/><rect x="625" y="154" width="5" height="2" fill="rgb(18,0,0)"/><rect x="311" y="259" width="4" height="2" fill="rgb(24,0,0)"/><rect x="359" y="265" width="6" height="2" fill="rgb(30,0,0)"/><rect x="724" y="288" width="6" height="2" fill="rgb(20,0,0)"/><rect x="257" y="308" width="5" height="2" fill="rgb(18,0,0)"/><rect x="389" y="289" width="4" height="2" fill="rgb(24,0,0)"/><rect x="438" y="186" width="6" height="2" fill="rgb(28,0,0)"/><rect x="507" y="273" width="9" height="2" fill="rgb(28,0,0)"/><rect x="336" y="291" width="5" height="2" fill="rgb(62,0,0)"/><rect x="762" y="250" width="4" height="2" fill="rgb(62,0,0)"/><rect x="642" y="255" width="4" height="2" fill="rgb(20,0,0)"/><rect x="493" y="261" width="6" height="2" fill="rgb(34,0,0)"/><rect x="666" y="173" width="9" height="2" fill="rgb(18,0,0)"/><rect x="452" y="279" width="5" height="2" fill="rgb(16,0,0)"/><rect x="598" y="279" width="5" height="2" fill="rgb(30,0,0)"/><rect x="291" y="290" width="4" height="2" fill="rgb(22,0,0)"/><rect x="553" y="264" width="5" height="2" fill="rgb(62,0,0)"/><rect x="651" y="189" width="5" height="2" fill="rgb(16,0,0)"/><rect x="434" y="318" width="5" height="2" fill="rgb(62,0,0)"/><rect x="558" y="246" width="5" height="2" fill="rgb(24,0,0)"/><rect x="686" y="246" width="5" height="2" fill="rgb(14,0,0)"/><rect x="560" y="209" width="4" height="2" fill="rgb(14,0,0)"/><rect x="695" y="144" width="5" height="2" fill="rgb(24,0,0)"/><rect x="376" y="268" width="4" height="2" fill="rgb(20,0,0)"/><rect x="274" y="232" width="5" height="2" fill="rgb(18,0,0)"/><rect x="519" y="250" width="5" height="2" fill="rgb(34,0,0)"/><rect x="259" y="144" width="4" height="2" fill="rgb(36,0,0)"/><rect x="257" y="226" width="5" height="2" fill="rgb(24,0,0)"/><rect x="502" y="164" width="5" height="2" fill="rgb(62,0,0)"/><rect x="464" y="216" width="4" height="2" fill="rgb(22,0,0)"/><rect x="281" y="231" width="6" height="2" fill="rgb(28,0,0)"/><rect x="575" y="255" width="5" height="2" fill="rgb(14,0,0)"/><rect x="336" y="224" width="5" height="2" fill="rgb(30,0,0)"/><rect x="508" y="230" width="4" height="2" fill="rgb(28,0,0)"/><rect x="632" y="240" width="9" height="2" fill="rgb(26,0,0)"/><rect x="731" y="241" width="5" height="2" fill="rgb(24,0,0)"/><rect x="263" y="244" width="6" height="2" fill="rgb(34,0,0)"/><rect x="520" y="281" width="4" height="2" fill="rgb(32,0,0)"/><rect x="255" y="229" width="6" height="2" fill="rgb(14,0,0)"/><rect x="338" y="258" width="6" height="2" fill="rgb(24,0,0)"/><rect x="401" y="271" width="6" height="2" fill="rgb(22,0,0)"/><rect x="265" y="259" width="5" height="2" fill="rgb(22,0,0)"/><rect x="751" y="275" width="5" height="2" fill="rgb(36,0,0)"/><rect x="256" y="222" width="5" height="2" fill="rgb(16,0,0)"/><rect x="707" y="314" width="6" height="2" fill="rgb(50,0,0)"/><rect x="574" y="221" width="6" height="2" fill="rgb(24,0,0)"/><rect x="276" y="205" width="4" height="2" fill="rgb(32,0,0)"/><rect x="736" y="260" width="5" height="2" fill="rgb(24,0,0)"/><rect x="685" y="247" width="5" height="2" fill="rgb(16,0,0)"/><rect x="655" y="211" width="5" height="2" fill="rgb(20,0,0)"/><rect x="770" y="237" width="6" height="2" fill="rgb(28,0,0)"/><rect x="762" y="240" width="6" height="2" fill="rgb(62,0,0)"/><rect x="341" y="279" width="4" height="2" fill="rgb(24,0,0)"/><rect x="417" y="237" width="5" height="2" fill="rgb(36,0,0)"/><rect x="407" y="278" width="5" height="2" fill="rgb(50,0,0)"/><rect x="461" y="288" width="4" height="2" fill="rgb(30,0,0)"/><rect x="566" y="296" width="5" height="2" fill="rgb(34,0,0)"/><rect x="685" y="246" width="9" height="2" fill="rgb(14,0,0)"/><rect x="448" y="183" width="6" height="2" fill="rgb(42,0,0)"/><rect x="658" y="239" width="5" height="2" fill="rgb(22,0,0)"/><rect x="682" y="271" width="6" height="2" fill="rgb(32,0,0)"/><rect x="303" y="234" width="5" height="2" fill="rgb(24,0,0)"/><rect x="701" y="301" width="9" height="2" fill="rgb(20,0,0)"/><rect x="756" y="220" width="5" height="2" fill="rgb(14,0,0)"/><rect x="367" y="147" width="4" height="2" fill="rgb(28,0,0)"/><rect x="434" y="249" width="5" height="2" fill="rgb(20,0,0)"/><rect x="585" y="256" width="5" height="2" fill="rgb(42,0,0)"/><rect x="581" y="255" width="5" height="2" fill="rgb(80,0,0)"/><rect x="716" y="241" width="6" height="2" fill="rgb(20,0,0)"/><rect x="460" y="301" width="5" height="2" fill="rgb(14,0,0)"/><rect x="531" y="311" width="9" height="2" fill="rgb(16,0,0)"/><rect x="486" y="240" width="6" height="2" fill="rgb(18,0,0)"/><rect x="331" y="259" width="4" height="2" fill="rgb(28,0,0)"/><rect x="671" y="220" width="6" height="2" fill="rgb(24,0,0)"/><rect x="440" y="268" width="5" height="2" fill="rgb(32,0,0)"/><rect x="781" y="298" width="9" height="2" fill="rgb(24,0,0)"/><rect x="234" y="266" width="9" height="2" fill="rgb(24,0,0)"/><rect x="330" y="307" width="9" height="2" fill="rgb(14,0,0)"/><rect x="258" y="138" width="9" height="2" fill="rgb(20,0,0)"/><rect x="748" y="227" width="4" height="2" fill="rgb(18,0,0)"/><rect x="304" y="263" width="6" height="2" fill="rgb(26,0,0)"/><rect x="514" y="220" width="5" height="2" fill="rgb(62,0,0)"/><rect x="320" y="282" width="9" height="2" fill="rgb(24,0,0)"/><rect x="358" y="162" width="6" height="2" fill="rgb(62,0,0)"/><rect x="560" y="286" width="9" height="2" fill="rgb(16,0,0)"/><rect x="501" y="127" width="9" height="2" fill="rgb(50,0,0)"/><rect x="460" y="190" width="9" height="2" fill="rgb(34,0,0)"/><rect x="456" y="270" width="5" height="2" fill="rgb(18,0,0)"/><rect x="427" y="213" width="6" height="2" fill="rgb(18,0,0)"/><rect x="308" y="226" width="5" height="2" fill="rgb(18,0,0)"/><rect x="496" y="298" width="6" height="2" fill="rgb(30,0,0)"/><rect x="491" y="166" width="9" height="2" fill="rgb(24,0,0)"/><rect x="358" y="197" width="6" height="2" fill="rgb(20,0,0)"/><rect x="426" y="245" width="5" height="2" fill="rgb(20,0,0)"/><rect x="710" y="216" width="5" height="2" fill="rgb(24,0,0)"/><rect x="580" y="249" width="9" height="2" fill="rgb(32,0,0)"/><rect x="315" y="256" width="5" height="2" fill="rgb(42,0,0)"/><rect x="432" y="296" width="5" height="2" fill="rgb(24,0,0)"/><rect x="535" y="207" width="5" height="2" fill="rgb(14,0,0)"/><rect x="572" y="252" width="5" height="2" fill="rgb(24,0,0)"/><rect x="727" y="260" width="6" height="2" fill="rgb(20,0,0)"/><rect x="414" y="267" width="4" height="2" fill="rgb(14,0,0)"/><rect x="674" y="140" width="5" height="2" fill="rgb(34,0,0)"/><rect x="389" y="295" width="4" height="2" fill="rgb(18,0,0)"/><rect x="336" y="139" width="5" height="2" fill="rgb(28,0,0)"/><rect x="350" y="213" width="5" height="2" fill="rgb(28,0,0)"/><rect x="535" y="320" width="6" height="2" fill="rgb(26,0,0)"/><rect x="250" y="277" width="4" height="2" fill="rgb(42,0,0)"/><rect x="715" y="266" width="4" height="2" fill="rgb(18,0,0)"/><rect x="259" y="152" width="4" height="2" fill="rgb(20,0,0)"/><rect x="318" y="163" width="5" height="2" fill="rgb(20,0,0)"/><rect x="774" y="248" width="6" height="2" fill="rgb(28,0,0)"/><rect x="498" y="132" width="5" height="2" fill="rgb(24,0,0)"/><rect x="726" y="284" width="6" height="2" fill="rgb(24,0,0)"/><rect x="575" y="306" width="6" height="2" fill="rgb(20,0,0)"/><rect x="720" y="244" width="9" height="2" fill="rgb(22,0,0)"/><rect x="708" y="308" width="6" height="2" fill="rgb(24,0,0)"/><rect x="612" y="158" width="5" height="2" fill="rgb(18,0,0)"/><rect x="622" y="247" width="5" height="2" fill="rgb(22,0,0)"/><rect x="761" y="267" width="6" height="2" fill="rgb(26,0,0)"/><rect x="378" y="306" width="9" height="2" fill="rgb(62,0,0)"/><rect x="410" y="263" width="5" height="2" fill="rgb(30,0,0)"/><rect x="707" y="224" width="6" height="2" fill="rgb(16,0,0)"/><rect x="311" y="264" width="9" height="2" fill="rgb(24,0,0)"/><rect x="466" y="312" width="4" height="2" fill="rgb(16,0,0)"/><rect x="382" y="289" width="5" height="2" fill="rgb(18,0,0)"/><rect x="636" y="223" width="5" height="2" fill="rgb(26,0,0)"/><rect x="264" y="178" width="9" height="2" fill="rgb(24,0,0)"/><rect x="784" y="264" width="6" height="2" fill="rgb(42,0,0)"/><rect x="710" y="296" width="4" height="2" fill="rgb(16,0,0)"/><rect x="231.6" y="152.2" width="6" height="2" fill="rgb(150,6,3)"/><rect x="256.0" y="152.2" width="6" height="2" fill="rgb(169,7,4)"/><rect x="256.5" y="157.0" width="5" height="2" fill="rgb(150,6,3)"/><rect x="276.7" y="144.9" width="14" height="2" fill="rgb(47,2,1)"/><rect x="312.0" y="135.8" width="4" height="2" fill="rgb(235,10,6)"/><rect x="335.9" y="124.8" width="5" height="2" fill="rgb(235,10,6)"/><rect x="366.1" y="165.0" width="5" height="2" fill="rgb(235,10,6)"/><rect x="385.8" y="198.8" width="5" height="2" fill="rgb(235,10,6)"/><rect x="385.5" y="134.0" width="10" height="2" fill="rgb(58,2,1)"/><rect x="416.0" y="134.0" width="5" height="2" fill="rgb(235,10,6)"/><rect x="430.0" y="172.2" width="10" height="2" fill="rgb(150,6,3)"/><rect x="450.5" y="132.0" width="5" height="2" fill="rgb(235,10,6)"/><rect x="441.0" y="135.8" width="6" height="2" fill="rgb(115,4,2)"/><rect x="436.6" y="141.2" width="4" height="2" fill="rgb(115,4,2)"/><rect x="453.0" y="125.0" width="14" height="2" fill="rgb(150,6,3)"/><rect x="471.5" y="209.8" width="5" height="2" fill="rgb(235,10,6)"/><rect x="466.3" y="217.4" width="5" height="2" fill="rgb(115,4,2)"/><rect x="456.1" y="227.3" width="5" height="2" fill="rgb(235,10,6)"/><rect x="262.0" y="217.4" width="4" height="2" fill="rgb(115,4,2)"/><rect x="256.5" y="231.3" width="5" height="2" fill="rgb(150,6,3)"/><rect x="267.0" y="244.0" width="4" height="2" fill="rgb(115,4,2)"/><rect x="271.5" y="249.5" width="5" height="2" fill="rgb(115,4,2)"/><rect x="305.5" y="262.3" width="6" height="2" fill="rgb(235,10,6)"/><rect x="315.9" y="253.5" width="5" height="2" fill="rgb(150,6,3)"/><rect x="315.4" y="271.7" width="6" height="2" fill="rgb(235,10,6)"/><rect x="241.2" y="275.4" width="5" height="2" fill="rgb(235,10,6)"/><rect x="280.6" y="273.6" width="10" height="2" fill="rgb(84,3,2)"/><rect x="335.9" y="249.5" width="5" height="2" fill="rgb(84,3,2)"/><rect x="420.3" y="262.3" width="6" height="2" fill="rgb(235,10,6)"/><rect x="406.9" y="229.0" width="5" height="2" fill="rgb(84,3,2)"/><rect x="412.0" y="242.0" width="4" height="2" fill="rgb(115,4,2)"/><rect x="383.6" y="283.4" width="8" height="2" fill="rgb(115,4,2)"/><rect x="336.4" y="292.5" width="4" height="2" fill="rgb(115,4,2)"/><rect x="336.4" y="307.5" width="4" height="2" fill="rgb(150,6,3)"/><rect x="262.0" y="307.5" width="4" height="2" fill="rgb(115,4,2)"/><rect x="401.5" y="305.7" width="10" height="2" fill="rgb(84,3,2)"/><rect x="451.0" y="269.6" width="4" height="2" fill="rgb(115,4,2)"/><rect x="371.5" y="258.6" width="5" height="2" fill="rgb(58,2,1)"/><rect x="521.0" y="128.5" width="5" height="2" fill="rgb(115,4,2)"/><rect x="580.5" y="135.8" width="5" height="2" fill="rgb(235,10,6)"/><rect x="586.6" y="143.0" width="10" height="2" fill="rgb(58,2,1)"/><rect x="621.0" y="128.5" width="4" height="2" fill="rgb(115,4,2)"/><rect x="676.2" y="135.8" width="5" height="2" fill="rgb(235,10,6)"/><rect x="680.9" y="126.7" width="5" height="2" fill="rgb(115,4,2)"/><rect x="676.2" y="145.0" width="5" height="2" fill="rgb(115,4,2)"/><rect x="667.0" y="143.0" width="4" height="2" fill="rgb(84,3,2)"/><rect x="765.8" y="130.3" width="5" height="2" fill="rgb(115,4,2)"/><rect x="765.8" y="150.3" width="5" height="2" fill="rgb(115,4,2)"/><rect x="785.5" y="150.3" width="5" height="2" fill="rgb(150,6,3)"/><rect x="641.2" y="168.6" width="5" height="2" fill="rgb(150,6,3)"/><rect x="691.3" y="168.6" width="4" height="2" fill="rgb(115,4,2)"/><rect x="615.5" y="168.6" width="5" height="2" fill="rgb(84,3,2)"/><rect x="685.5" y="215.6" width="5" height="2" fill="rgb(235,10,6)"/><rect x="711.2" y="229.5" width="5" height="2" fill="rgb(235,10,6)"/><rect x="711.0" y="244.0" width="9" height="2" fill="rgb(235,10,6)"/><rect x="550.9" y="229.5" width="5" height="2" fill="rgb(150,6,3)"/><rect x="556.5" y="238.6" width="5" height="2" fill="rgb(150,6,3)"/><rect x="515.8" y="242.2" width="6" height="2" fill="rgb(235,10,6)"/><rect x="546.5" y="255.0" width="5" height="2" fill="rgb(150,6,3)"/><rect x="541.0" y="267.7" width="5" height="2" fill="rgb(150,6,3)"/><rect x="577.0" y="233.0" width="4" height="2" fill="rgb(84,3,2)"/><rect x="660.9" y="242.2" width="5" height="2" fill="rgb(115,4,2)"/><rect x="660.9" y="246.6" width="5" height="2" fill="rgb(84,3,2)"/><rect x="651.1" y="253.0" width="5" height="2" fill="rgb(84,3,2)"/><rect x="680.9" y="264.0" width="5" height="2" fill="rgb(115,4,2)"/><rect x="680.9" y="269.5" width="5" height="2" fill="rgb(150,6,3)"/><rect x="711.7" y="260.4" width="4" height="2" fill="rgb(115,4,2)"/><rect x="711.7" y="271.4" width="4" height="2" fill="rgb(115,4,2)"/><rect x="721.0" y="266.0" width="5" height="2" fill="rgb(115,4,2)"/><rect x="751.7" y="266.0" width="4" height="2" fill="rgb(115,4,2)"/><rect x="597.0" y="262.0" width="4" height="2" fill="rgb(115,4,2)"/><rect x="605.5" y="260.4" width="5" height="2" fill="rgb(84,3,2)"/><rect x="590.9" y="275.0" width="5" height="2" fill="rgb(84,3,2)"/><rect x="580.5" y="294.7" width="5" height="2" fill="rgb(150,6,3)"/><rect x="551.4" y="285.0" width="4" height="2" fill="rgb(84,3,2)"/><rect x="531.3" y="294.7" width="4" height="2" fill="rgb(84,3,2)"/><rect x="631.5" y="305.7" width="4" height="2" fill="rgb(84,3,2)"/><rect x="605.0" y="314.8" width="6" height="2" fill="rgb(190,8,4)"/><rect x="536.3" y="313.0" width="5" height="2" fill="rgb(84,3,2)"/><rect x="546.5" y="324.0" width="5" height="2" fill="rgb(150,6,3)"/><rect x="736.4" y="300.0" width="4" height="2" fill="rgb(115,4,2)"/><rect x="751.7" y="300.0" width="4" height="2" fill="rgb(115,4,2)"/><rect x="741.5" y="311.0" width="4" height="2" fill="rgb(84,3,2)"/><rect x="786.0" y="304.0" width="4" height="2" fill="rgb(84,3,2)"/><rect x="776.5" y="322.0" width="4" height="2" fill="rgb(84,3,2)"/></svg>
<div style="left:232px;top:340px;width:11px;height:11px;background:linear-gradient(135deg,#e4e4e4,#ffffff);border:1px solid #7c7c7c;"></div>
<svg style="left:232px;top:340px" width="11" height="11"><path d="M2.6 5.2 L4.6 7.6 L8.6 2.8" stroke="#000" stroke-width="1.7" fill="none"/></svg>
<div style="left:303.3px;top:340px;width:11px;height:11px;background:linear-gradient(135deg,#e4e4e4,#ffffff);border:1px solid #7c7c7c;"></div>
<svg style="left:303.3px;top:340px" width="11" height="11"><path d="M2.6 5.2 L4.6 7.6 L8.6 2.8" stroke="#000" stroke-width="1.7" fill="none"/></svg>
<div style="left:371.5px;top:335px;width:90.3px;height:21px;background:#e6e6e6;border:1px solid #8e8e8e;"></div>
<div style="left:468.8px;top:337px;width:1px;height:18px;background:#000;"></div>
<div style="left:529px;top:337px;width:105.5px;height:6px;background:#ececec;border:1px solid #9c9c9c;"></div>
<svg style="left:0;top:0" width="796" height="599"><defs><pattern id="hp609" width="2" height="2" patternUnits="userSpaceOnUse"><rect width="2" height="2" fill="#e4eaf4"/><rect width="1" height="1" fill="#7f98c0"/><rect x="1" y="1" width="1" height="1" fill="#7f98c0"/></pattern></defs><path d="M603.2 334 Q603.2 333 604.2 333 H615.2 Q616.2 333 616.2 334 V341 L609.7 347.5 L603.2 341 Z" fill="#f4f6fa" stroke="#303030" stroke-width="1.1"/><rect x="605.7" y="335.5" width="8" height="6" fill="url(#hp609)"/></svg>
<div style="left:529px;top:352px;width:106px;height:4.5px;background:repeating-linear-gradient(90deg,#d0dcf0 0,#d0dcf0 4px,#e3e9f4 4px,#e3e9f4 5.55px);"></div>
<div style="left:672px;top:337px;width:111.5px;height:6px;background:#ececec;border:1px solid #9c9c9c;"></div>
<svg style="left:0;top:0" width="796" height="599"><defs><pattern id="hp678" width="2" height="2" patternUnits="userSpaceOnUse"><rect width="2" height="2" fill="#e4eaf4"/><rect width="1" height="1" fill="#7f98c0"/><rect x="1" y="1" width="1" height="1" fill="#7f98c0"/></pattern></defs><path d="M671.7 334 Q671.7 333 672.7 333 H683.7 Q684.7 333 684.7 334 V341 L678.2 347.5 L671.7 341 Z" fill="#f4f6fa" stroke="#303030" stroke-width="1.1"/><rect x="674.2" y="335.5" width="8" height="6" fill="url(#hp678)"/></svg>
<div style="left:677.5px;top:352px;width:1.2px;height:4px;background:#d0dcf0;"></div>
<div style="left:689.2px;top:352px;width:1.2px;height:4px;background:#d0dcf0;"></div>
<div style="left:700.9px;top:352px;width:1.2px;height:4px;background:#d0dcf0;"></div>
<div style="left:712.6px;top:352px;width:1.2px;height:4px;background:#d0dcf0;"></div>
<div style="left:724.3px;top:352px;width:1.2px;height:4px;background:#d0dcf0;"></div>
<div style="left:736.0px;top:352px;width:1.2px;height:4px;background:#d0dcf0;"></div>
<div style="left:747.7px;top:352px;width:1.2px;height:4px;background:#d0dcf0;"></div>
<div style="left:759.4px;top:352px;width:1.2px;height:4px;background:#d0dcf0;"></div>
<div style="left:771.1px;top:352px;width:1.2px;height:4px;background:#d0dcf0;"></div>
<div style="left:782.8px;top:352px;width:1.2px;height:4px;background:#d0dcf0;"></div>
<div style="left:225px;top:359.2px;width:567px;height:1.2px;background:#9c9c9c;"></div>
<div style="left:225px;top:360.4px;width:567px;height:2.2px;background:#fbfbfb;"></div>
<svg style="left:0;top:0" width="796" height="599"><polygon points="225.89999999999998,369.15 236.5,369.15 231.2,363.85" fill="#000"/></svg>
<svg style="left:0;top:0" width="796" height="599"><polygon points="236.5,363.85 247.10000000000002,363.85 241.8,369.15" fill="#000"/></svg>
<div style="left:225px;top:369.3px;width:567px;height:1px;background:#a8a8a8;"></div>
<div style="left:225px;top:370.3px;width:567px;height:1.4px;background:#f8f8f8;"></div>
<svg style="left:0;top:0" width="796" height="599"><path d="M231 389 C233 387 236 377 238 375.5 Q238.7 374.5 240.5 374.5 L332.0 374.5 Q333.2 374.5 333.5 375.8 L338 389" fill="#e2e2e2" stroke="none"/><path d="M231 389 C233 387 236 377 238 375.5 Q238.7 374.5 240.5 374.5 L332.0 374.5" fill="none" stroke="#f6f6f6" stroke-width="1.4"/><path d="M332.0 374.5 Q333.2 374.5 333.5 375.8 L338 389" fill="none" stroke="#909090" stroke-width="1"/></svg>
<svg style="left:0;top:0" width="796" height="599"><path d="M333.5 389 C335.5 387 336.5 376.5 338.5 375.0 Q339.2 374.0 341.0 374.0 L401.2 374.0 Q402.4 374.0 402.7 375.3 L407.5 389" fill="#e3e3e3" stroke="none"/><path d="M333.5 389 C335.5 387 336.5 376.5 338.5 375.0 Q339.2 374.0 341.0 374.0 L401.2 374.0" fill="none" stroke="#f6f6f6" stroke-width="1.4"/><path d="M401.2 374.0 Q402.4 374.0 402.7 375.3 L407.5 389" fill="none" stroke="#909090" stroke-width="1"/></svg>
<svg style="left:0;top:0" width="796" height="599"><path d="M691 404.6 C693 402.6 696 392.7 698 391.2 Q698.7 390.2 700.5 390.2 L784.5 390.2 Q785.7 390.2 786.0 391.5 L791 404.6" fill="#e2e2e2" stroke="none"/><path d="M691 404.6 C693 402.6 696 392.7 698 391.2 Q698.7 390.2 700.5 390.2 L784.5 390.2" fill="none" stroke="#f6f6f6" stroke-width="1.4"/><path d="M784.5 390.2 Q785.7 390.2 786.0 391.5 L791 404.6" fill="none" stroke="#909090" stroke-width="1"/></svg>
<svg style="left:0;top:0" width="796" height="599"><path d="M595 404.6 C597 402.6 600 392.7 602 391.2 Q602.7 390.2 604.5 390.2 L690.0 390.2 Q691.2 390.2 691.5 391.5 L696.5 404.6" fill="#e2e2e2" stroke="none"/><path d="M595 404.6 C597 402.6 600 392.7 602 391.2 Q602.7 390.2 604.5 390.2 L690.0 390.2" fill="none" stroke="#f6f6f6" stroke-width="1.4"/><path d="M690.0 390.2 Q691.2 390.2 691.5 391.5 L696.5 404.6" fill="none" stroke="#909090" stroke-width="1"/></svg>
<svg style="left:0;top:0" width="796" height="599"><path d="M540 404.6 C542 402.6 545 392.7 547 391.2 Q547.7 390.2 549.5 390.2 L594.0 390.2 Q595.2 390.2 595.5 391.5 L600.5 404.6" fill="#e2e2e2" stroke="none"/><path d="M540 404.6 C542 402.6 545 392.7 547 391.2 Q547.7 390.2 549.5 390.2 L594.0 390.2" fill="none" stroke="#f6f6f6" stroke-width="1.4"/><path d="M594.0 390.2 Q595.2 390.2 595.5 391.5 L600.5 404.6" fill="none" stroke="#909090" stroke-width="1"/></svg>
<svg style="left:0;top:0" width="796" height="599"><path d="M424 404.6 C426 402.6 429 392.7 431 391.2 Q431.7 390.2 433.5 390.2 L539.2 390.2 Q540.4000000000001 390.2 540.7 391.5 L545.7 404.6" fill="#e2e2e2" stroke="none"/><path d="M424 404.6 C426 402.6 429 392.7 431 391.2 Q431.7 390.2 433.5 390.2 L539.2 390.2" fill="none" stroke="#f6f6f6" stroke-width="1.4"/><path d="M539.2 390.2 Q540.4000000000001 390.2 540.7 391.5 L545.7 404.6" fill="none" stroke="#909090" stroke-width="1"/></svg>
<svg style="left:0;top:0" width="796" height="599"><path d="M360 404.6 C362 402.6 365 392.7 367 391.2 Q367.7 390.2 369.5 390.2 L423.3 390.2 Q424.5 390.2 424.8 391.5 L429.8 404.6" fill="#e2e2e2" stroke="none"/><path d="M360 404.6 C362 402.6 365 392.7 367 391.2 Q367.7 390.2 369.5 390.2 L423.3 390.2" fill="none" stroke="#f6f6f6" stroke-width="1.4"/><path d="M423.3 390.2 Q424.5 390.2 424.8 391.5 L429.8 404.6" fill="none" stroke="#909090" stroke-width="1"/></svg>
<svg style="left:0;top:0" width="796" height="599"><path d="M282 404.6 C284 402.6 287 392.7 289 391.2 Q289.7 390.2 291.5 390.2 L359.0 390.2 Q360.2 390.2 360.5 391.5 L365.5 404.6" fill="#e2e2e2" stroke="none"/><path d="M282 404.6 C284 402.6 287 392.7 289 391.2 Q289.7 390.2 291.5 390.2 L359.0 390.2" fill="none" stroke="#f6f6f6" stroke-width="1.4"/><path d="M359.0 390.2 Q360.2 390.2 360.5 391.5 L365.5 404.6" fill="none" stroke="#909090" stroke-width="1"/></svg>
<svg style="left:0;top:0" width="796" height="599"><path d="M226 404.6 C228 402.6 231 392.7 233 391.2 Q233.7 390.2 235.5 390.2 L281.2 390.2 Q282.4 390.2 282.7 391.5 L287.7 404.6" fill="#e2e2e2" stroke="none"/><path d="M226 404.6 C228 402.6 231 392.7 233 391.2 Q233.7 390.2 235.5 390.2 L281.2 390.2" fill="none" stroke="#f6f6f6" stroke-width="1.4"/><path d="M281.2 390.2 Q282.4 390.2 282.7 391.5 L287.7 404.6" fill="none" stroke="#909090" stroke-width="1"/></svg>
<div style="left:225px;top:405px;width:567px;height:1.6px;background:#f8f8f8;"></div>
<div style="left:225px;top:406.6px;width:567.5px;height:15.3px;background:#999999;"></div>
<svg style="left:0;top:0" width="796" height="599"><path d="M752.6 418.09999999999997 L758.8000000000001 411.79999999999995" stroke="#000" stroke-width="1.1" fill="none"/><path d="M755.4000000000001 410.5 H760.1 V415.2 Z" fill="#000"/><path d="M767.0999999999999 417.59999999999997 H774.5" stroke="#000" stroke-width="1.5" fill="none"/><path d="M782.8000000000001 411.0 L789.6 418.0 M789.6 411.0 L782.8000000000001 418.0" stroke="#1a1a1a" stroke-width="1" fill="none"/></svg>
<div style="left:226.5px;top:422px;width:340px;height:45.5px;background:#fff;border:1px solid #444;border-left:1.5px solid #111;border-top-color:#333;border-right-color:#222;"></div>
<div style="left:228px;top:423.3px;width:322.5px;height:14.4px;background:#c6d6ea;"></div>
<div style="left:550.5px;top:423px;width:1.7px;height:43.5px;background:#222;"></div>
<div style="left:552px;top:423.3px;width:13.5px;height:43px;background:#e4e4e4;border:1px solid #9c9c9c;"></div>
<div style="left:552px;top:423.3px;width:13.5px;height:13.5px;background:linear-gradient(90deg,#ffffff,#d2d2d2);border:1px solid #9c9c9c;"></div>
<div style="left:552px;top:452.8px;width:13.5px;height:13.5px;background:linear-gradient(90deg,#ffffff,#d2d2d2);border:1px solid #9c9c9c;"></div>
<svg style="left:0;top:0" width="796" height="599"><polygon points="554.75,432.0 562.75,432.0 558.75,428.0" fill="#000"/></svg>
<svg style="left:0;top:0" width="796" height="599"><polygon points="554.75,457.8 562.75,457.8 558.75,461.8" fill="#000"/></svg>
<div style="left:552px;top:438px;width:13.5px;height:12.5px;background-color:#dde5f2;background-image:linear-gradient(45deg,#9fb6d8 25%,transparent 25%,transparent 75%,#9fb6d8 75%),linear-gradient(45deg,#9fb6d8 25%,transparent 25%,transparent 75%,#9fb6d8 75%);background-size:2px 2px;background-position:0 0,1px 1px;border:1px solid #8aa2c4;"></div>
<div style="left:568.3px;top:422px;width:224.2px;height:45.5px;background:#fff;border:1px solid #444;border-left:1.7px solid #111;border-top-color:#222;"></div>
<div style="left:372px;top:476px;width:364.5px;height:1px;background:#8c8c8c;"></div>
<div style="left:225.5px;top:507px;width:206.5px;height:59px;background:#fff;border:1px solid #a0a0a0;border-left-color:#5a5a5a;border-top-color:#6a6a6a;"></div>
<div style="left:530.5px;top:507px;width:206.3px;height:59px;background:#fff;border:1px solid #a0a0a0;border-left-color:#5a5a5a;border-top-color:#6a6a6a;"></div>
<div style="left:440.5px;top:507.5px;width:81.5px;height:18px;background:linear-gradient(#ffffff 0%,#efefef 40%,#d6d6d6 100%);border:1px solid #a6a6a6;border-right-color:#8a8a8a;border-bottom-color:#8a8a8a;border-radius:1px;"></div>
<div style="left:440.5px;top:527.5px;width:81.5px;height:18px;background:linear-gradient(#ffffff 0%,#efefef 40%,#d6d6d6 100%);border:1px solid #a6a6a6;border-right-color:#8a8a8a;border-bottom-color:#8a8a8a;border-radius:1px;"></div>
<div style="left:440.5px;top:548px;width:81.5px;height:18px;background:linear-gradient(#ffffff 0%,#efefef 40%,#d6d6d6 100%);border:1px solid #a6a6a6;border-right-color:#8a8a8a;border-bottom-color:#8a8a8a;border-radius:1px;"></div>
<div style="left:225px;top:564.2px;width:552.5px;height:14px;background:#e4e4e4;border:1px solid #9c9c9c;"></div>
<div style="left:225px;top:564.2px;width:13.5px;height:14px;background:linear-gradient(#ffffff,#d2d2d2);border:1px solid #9c9c9c;"></div>
<div style="left:764.0px;top:564.2px;width:13.5px;height:14px;background:linear-gradient(#ffffff,#d2d2d2);border:1px solid #9c9c9c;"></div>
<svg style="left:0;top:0" width="796" height="599"><polygon points="233.95,567.3000000000001 233.95,575.1 230.05,571.2" fill="#000"/></svg>
<svg style="left:0;top:0" width="796" height="599"><polygon points="768.75,567.3000000000001 768.75,575.1 772.6500000000001,571.2" fill="#000"/></svg>
<div style="left:241px;top:564.2px;width:422px;height:14px;background-color:#dde5f2;background-image:linear-gradient(45deg,#9fb6d8 25%,transparent 25%,transparent 75%,#9fb6d8 75%),linear-gradient(45deg,#9fb6d8 25%,transparent 25%,transparent 75%,#9fb6d8 75%);background-size:2px 2px;background-position:0 0,1px 1px;border:1px solid #8aa2c4;"></div>
<div style="left:778px;top:423.3px;width:13.5px;height:140px;background:#e4e4e4;border:1px solid #9c9c9c;"></div>
<div style="left:778px;top:423.3px;width:13.5px;height:13.5px;background:linear-gradient(90deg,#ffffff,#d2d2d2);border:1px solid #9c9c9c;"></div>
<div style="left:778px;top:549.8px;width:13.5px;height:13.5px;background:linear-gradient(90deg,#ffffff,#d2d2d2);border:1px solid #9c9c9c;"></div>
<svg style="left:0;top:0" width="796" height="599"><polygon points="780.75,432.0 788.75,432.0 784.75,428.0" fill="#000"/></svg>
<svg style="left:0;top:0" width="796" height="599"><polygon points="780.75,554.8 788.75,554.8 784.75,558.8" fill="#000"/></svg>
<div style="left:778px;top:437px;width:13.5px;height:65px;background-color:#dde5f2;background-image:linear-gradient(45deg,#9fb6d8 25%,transparent 25%,transparent 75%,#9fb6d8 75%),linear-gradient(45deg,#9fb6d8 25%,transparent 25%,transparent 75%,#9fb6d8 75%);background-size:2px 2px;background-position:0 0,1px 1px;border:1px solid #8aa2c4;"></div>
<div style="left:778px;top:564px;width:14px;height:14.5px;background:#e3e3e3;border:1px solid #cfcfcf;"></div>
<div style="left:225px;top:578.6px;width:568px;height:2.2px;background:#fbfbfb;"></div>
<div style="left:215px;top:582px;width:581px;height:2px;background:#7c7c7c;"></div>
<div style="left:4px;top:584px;width:792px;height:12.3px;background:#e3e3e3;"></div>
<div style="left:215px;top:584px;width:581px;height:1px;background:#f0f0f0;"></div>
<span class="t" id="t0" style="left:23.54px;top:9px;transform:scaleX(0.9205);font-weight:bold;font-size:13px;color:#eef2fc;">caWorkbench 3.0 - An Open Extensible Platform for BioMedical Informatics</span>
<span class="t" id="t1" style="left:12.18px;top:31.1px;transform:scaleX(0.8366);">File</span>
<span class="t" id="t2" style="left:41.84px;top:31.1px;transform:scaleX(0.9183);">Edit</span>
<span class="t" id="t3" style="left:74.25px;top:31.1px;transform:scaleX(0.8916);">View</span>
<span class="t" id="t4" style="left:110.17px;top:31.1px;transform:scaleX(0.8633);">Commands</span>
<span class="t" id="t5" style="left:173.95px;top:31.1px;transform:scaleX(0.9073);">Tools</span>
<span class="t" id="t6" style="left:211.16px;top:31.1px;transform:scaleX(0.8879);">Help</span>
<span class="t" id="t7" style="left:75.24px;top:72.6px;transform:scaleX(0.9125);">Project Folders</span>
<span class="t" id="t8" style="left:25.54px;top:91px;transform:scaleX(0.9103);">Workspace</span>
<span class="t" id="t9" style="left:44.03px;top:106.5px;transform:scaleX(0.9323);">Project</span>
<span class="t" id="t10" style="left:62.55px;top:122.5px;transform:scaleX(0.9077);">Merged DataSet: JB-ccmp_0120.t</span>
<span class="t" id="t11" style="left:15.55px;top:323.5px;transform:scaleX(0.9036);">Markers</span>
<span class="t" id="t12" style="left:61.54px;top:323px;transform:scaleX(0.9245);">Arrays/Phenotypes</span>
<span class="t" id="t13" style="left:7.55px;top:359.3px;transform:scaleX(0.8938);">Search:</span>
<span class="t" id="t14" style="left:151.55px;top:359.3px;transform:scaleX(0.9072);">Find Next</span>
<span class="t" id="t15" style="left:9.55px;top:378.3px;transform:scaleX(0.9076);">JB-ccmp_0120.txt</span>
<span class="t" id="t16" style="left:9.54px;top:392.85px;transform:scaleX(0.9133);">JB-ccmp_0218.txt</span>
<span class="t" id="t17" style="left:9.54px;top:407.40000000000003px;transform:scaleX(0.9133);">JB-ccmp_0718.txt</span>
<span class="t" id="t18" style="left:9.54px;top:421.95000000000005px;transform:scaleX(0.9219);">JB-ccmp_0811.txt</span>
<span class="t" id="t19" style="left:9.54px;top:436.5px;transform:scaleX(0.9133);">JB-ccmp_1003.txt</span>
<span class="t" id="t20" style="left:9.54px;top:451.05px;transform:scaleX(0.9219);">JB-ccmp_1109.txt</span>
<span class="t" id="t21" style="left:10.54px;top:471.3px;transform:scaleX(0.9244);">Array/Phenotype Sets</span>
<span class="t" id="t22" style="left:11.03px;top:488px;transform:scaleX(0.9303);">Default</span>
<span class="t" id="t23" style="left:174.25px;top:488.1px;transform:scaleX(0.9088);">New</span>
<span class="t" id="t24" style="left:57.04px;top:522.3px;transform:scaleX(0.9152);">Selection [0]</span>
<span class="t" id="t25" style="left:22.57px;top:563.6px;transform:scaleX(0.8506);">Case</span>
<span class="t" id="t26" style="left:69.54px;top:563.6px;transform:scaleX(0.9284);">Control</span>
<span class="t" id="t27" style="left:127.16px;top:563.6px;transform:scaleX(0.8756);">Test</span>
<span class="t" id="t28" style="left:170.01px;top:563.6px;transform:scaleX(0.9767);">Ignore</span>
<span class="t" id="t29" style="left:244.05px;top:59.8px;transform:scaleX(0.9035);">Microarray Viewer</span>
<span class="t" id="t30" style="left:241.55px;top:76.7px;transform:scaleX(0.8945);">Reverse Engineering</span>
<span class="t" id="t31" style="left:346.54px;top:76.7px;transform:scaleX(0.9112);">Scatter Plot</span>
<span class="t" id="t32" style="left:412.75px;top:76.7px;transform:scaleX(0.9063);">caBIO Pathways</span>
<span class="t" id="t33" style="left:502.45px;top:76.7px;transform:scaleX(0.8967);">Tabular Microarray Viewer</span>
<span class="t" id="t34" style="left:633.45px;top:76.7px;transform:scaleX(0.9030);">Sequence Retriever</span>
<span class="t" id="t35" style="left:734.74px;top:76.7px;transform:scaleX(0.9290);">Synteny</span>
<span class="t" id="t36" style="left:238.04px;top:92.3px;transform:scaleX(0.9224);">Marker Annotations</span>
<span class="t" id="t37" style="left:344.57px;top:92.3px;transform:scaleX(0.8673);">Color Mosaic</span>
<span class="t" id="t38" style="left:419.06px;top:92.3px;transform:scaleX(0.8856);">Expression Profiles</span>
<span class="t" id="t39" style="left:525.65px;top:92.3px;transform:scaleX(0.8930);">Expression Value Distribution</span>
<span class="t" id="t40" style="left:674.75px;top:92.3px;transform:scaleX(0.8986);">Gene Ontology</span>
<span class="t" id="t41" style="left:758.71px;top:92.3px;transform:scaleX(0.7844);">GSEA</span>
<span class="t" id="t42" style="left:246.54px;top:338.4px;transform:scaleX(0.9237);">All Arrays</span>
<span class="t" id="t43" style="left:318.56px;top:338.4px;transform:scaleX(0.8701);">All Markers</span>
<span class="t" id="t44" style="left:374.55px;top:338.4px;transform:scaleX(0.9076);">JB-ccmp_0120.txt</span>
<span class="t" id="t45" style="left:462.98px;top:338.4px;transform:scaleX(1.0480);">-</span>
<span class="t" id="t46" style="left:470.71px;top:338.4px;transform:scaleX(0.9830);">+Intensity</span>
<span class="t" id="t47" style="left:640.73px;top:338.4px;transform:scaleX(0.9414);">Array</span>
<span class="t" id="t48" style="left:239.15px;top:374.3px;transform:scaleX(0.9082);">Synteny Parameters</span>
<span class="t" id="t49" style="left:340.36px;top:372.8px;transform:scaleX(0.8740);">Normalization</span>
<span class="t" id="t50" style="left:238.26px;top:390px;transform:scaleX(0.8857);">Analysis</span>
<span class="t" id="t51" style="left:295.55px;top:390px;transform:scaleX(0.8920);">Associations</span>
<span class="t" id="t52" style="left:373.39px;top:390px;transform:scaleX(0.8299);">caSCRIPT</span>
<span class="t" id="t53" style="left:440.53px;top:390px;transform:scaleX(0.9405);">Dataset Annotation</span>
<span class="t" id="t54" style="left:552.34px;top:390px;transform:scaleX(0.9233);">Filtering</span>
<span class="t" id="t55" style="left:611.34px;top:390px;transform:scaleX(0.9245);">Dataset History</span>
<span class="t" id="t56" style="left:706.04px;top:390px;transform:scaleX(0.9271);">Experiment Info</span>
<span class="t" id="t57" style="left:228.57px;top:423.9px;transform:scaleX(0.8657);">HouseKeeping Genes Normalizer</span>
<span class="t" id="t58" style="left:228.55px;top:438.6px;transform:scaleX(0.9060);">Log2 Transformation</span>
<span class="t" id="t59" style="left:228.57px;top:453px;transform:scaleX(0.8509);">Marker-based centering</span>
<span class="t" id="t60" style="left:225.34px;top:469.9px;transform:scaleX(0.9240);font-weight:bold;font-size:12px;color:#5c5c5c;">HouseKeeping Parameters</span>
<span class="t" id="t61" style="left:746.59px;top:479.9px;transform:scaleX(0.8267);font-weight:bold;font-size:12px;color:#5c5c5c;">Norma</span>
<span class="t" id="t62" style="left:225.05px;top:493.4px;transform:scaleX(0.8999);">Excluded Genes [0]</span>
<span class="t" id="t63" style="left:530.05px;top:493.4px;transform:scaleX(0.9071);">Current Selected Genes [0]</span>
<span class="t" id="t64" style="left:477.99px;top:509.79999999999995px;transform:scaleX(1.0115);">&gt;</span>
<span class="t" id="t65" style="left:477.99px;top:529.8px;transform:scaleX(1.0115);">&lt;</span>
<span class="t" id="t66" style="left:463.56px;top:550px;transform:scaleX(0.8765);">Clear all</span>
</div></body></html>
